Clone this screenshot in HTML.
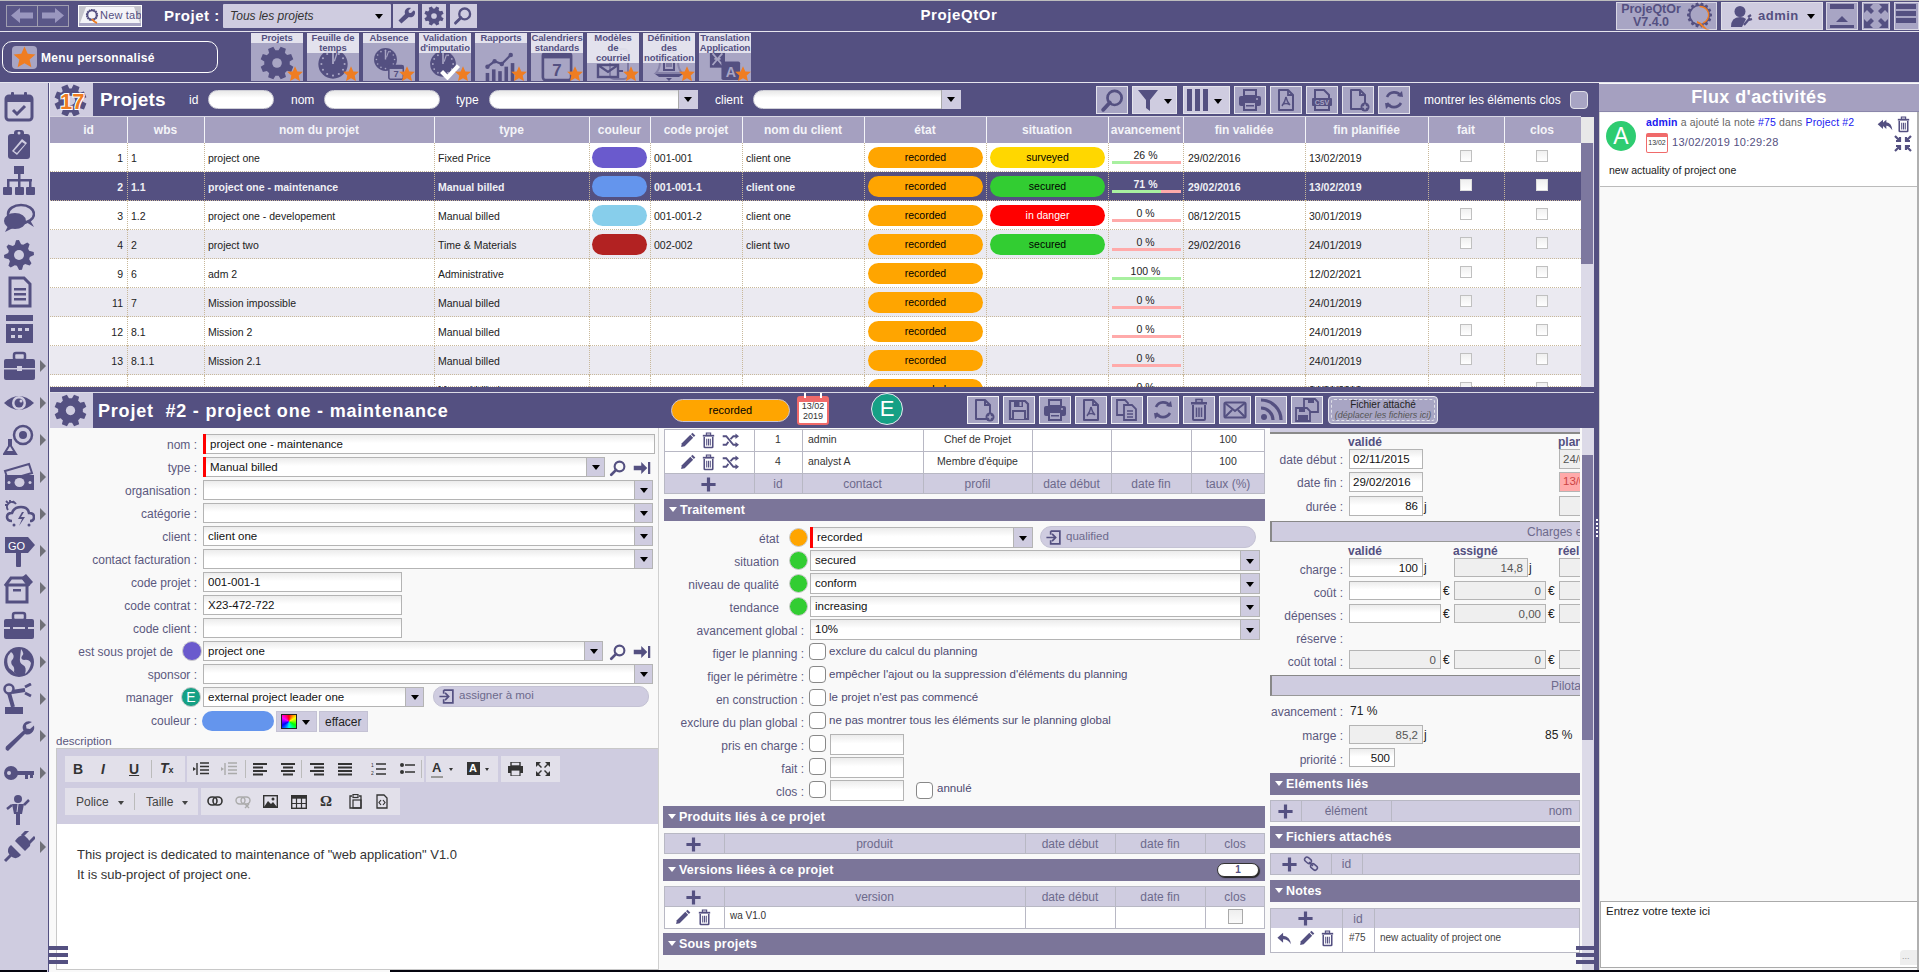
<!DOCTYPE html>
<html><head><meta charset="utf-8"><style>*{box-sizing:border-box}
html,body{margin:0;padding:0}
body{width:1919px;height:972px;overflow:hidden;position:relative;background:#545081;font-family:"Liberation Sans",sans-serif;font-size:11px;color:#000}
.a{position:absolute}
.w{color:#fff}
.b{font-weight:bold}
.c{text-align:center}
.r{text-align:right}
.nw{white-space:nowrap}</style></head><body>
<div class="a" style="left:0;top:0;width:1919px;height:1px;background:#bdbdbd"></div>
<div class="a" style="left:0;top:31px;width:1919px;height:1px;background:#e6e5ee"></div>
<div class="a" style="left:0;top:82px;width:1919px;height:1px;background:#e6e5ee"></div>
<div class="a" style="left:6px;top:5px;width:63px;height:22px;border:1px solid #a09eb0;background:#5a5788"></div>
<div class="a" style="left:37px;top:5px;width:1px;height:22px;background:#a09eb0"></div>
<svg class="a" style="left:10px;top:7px" width="24" height="17" viewBox="0 0 24 17"><path d="M1 8.5 L10 1 V5.5 H23 V11.5 H10 V16z" fill="#9a97bf"/></svg>
<svg class="a" style="left:41px;top:7px" width="24" height="17" viewBox="0 0 24 17"><path d="M23 8.5 L14 1 V5.5 H1 V11.5 H14 V16z" fill="#9a97bf"/></svg>
<div class="a" style="left:78px;top:5px;width:64px;height:22px;background:#c4c4cc;border:1px solid #fff"></div>
<div class="a" style="left:79px;top:23px;width:62px;height:3px;background:#a8a5c4"></div>
<div class="a" style="left:80px;top:7px;width:60px;height:16px;background:#f4f4f8;clip-path:polygon(10% 0,90% 0,100% 100%,0 100%)"></div>
<svg class="a" style="left:85px;top:8px" width="15" height="16" viewBox="0 0 15 16"><circle cx="7" cy="7" r="5" fill="none" stroke="#545081" stroke-width="2.2" stroke-dasharray="1.6 .6"/><circle cx="7" cy="7" r="4.5" fill="none" stroke="#545081" stroke-width="1.4"/><path d="M7 11 Q9 14 12 15" stroke="#ef7d22" stroke-width="2" fill="none"/></svg>
<div class="a nw" style="left:100px;top:9px;font-size:11px;color:#545081;letter-spacing:.2px;width:41px;overflow:hidden">New tab</div>
<div class="a w b nw" style="left:164px;top:7px;font-size:15px;letter-spacing:.5px">Projet :</div>
<div class="a" style="left:223px;top:4px;width:168px;height:24px;background:#cfcce0;border-radius:1px"></div>
<div class="a nw" style="left:230px;top:9px;font-size:12px;font-style:italic;color:#333">Tous les projets</div>
<div class="a" style="left:375px;top:14px;width:0;height:0;border-left:4px solid transparent;border-right:4px solid transparent;border-top:5px solid #000"></div>
<div class="a" style="left:393px;top:4px;width:25px;height:24px;background:#cfcce0"></div>
<div class="a" style="left:422px;top:4px;width:24px;height:24px;background:#cfcce0"></div>
<div class="a" style="left:450px;top:4px;width:27px;height:24px;background:#cfcce0"></div>
<svg class="a" style="left:396px;top:6px" width="20" height="20" viewBox="0 0 24 24"><path d="M21 5.5l-3 3-2.5-.5-.5-2.5 3-3c-2-.8-4.3-.4-5.9 1.2-1.6 1.6-2 3.9-1.2 5.9L3 17.5 6.5 21l8.9-7.9c2 .8 4.3.4 5.9-1.2 1.6-1.6 2-3.9 1.2-5.9z" fill="#545081"/></svg>
<svg class="a" style="left:424px;top:6px" width="20" height="20" viewBox="0 0 24 24"><polygon points="20.94,13.08 23.52,14.58 22.00,18.27 19.11,17.52 18.64,18.08 18.12,18.60 17.56,19.08 18.32,21.96 14.64,23.50 13.13,20.93 12.39,20.99 11.66,20.99 10.92,20.94 9.42,23.52 5.73,22.00 6.48,19.11 5.92,18.64 5.40,18.12 4.92,17.56 2.04,18.32 0.50,14.64 3.07,13.13 3.01,12.39 3.01,11.66 3.06,10.92 0.48,9.42 2.00,5.73 4.89,6.48 5.36,5.92 5.88,5.40 6.44,4.92 5.68,2.04 9.36,0.50 10.87,3.07 11.61,3.01 12.34,3.01 13.08,3.06 14.58,0.48 18.27,2.00 17.52,4.89 18.08,5.36 18.60,5.88 19.08,6.44 21.96,5.68 23.50,9.36 20.93,10.87 20.99,11.61 20.99,12.34" fill="#545081"/><circle cx="12" cy="12" r="3.4" fill="#cfcce0"/></svg>
<svg class="a" style="left:453px;top:6px" width="20" height="20" viewBox="0 0 24 24"><circle cx="14" cy="9.5" r="6.5" fill="none" stroke="#545081" stroke-width="2.8"/><path d="M9.5 14 L3 20.5" stroke="#545081" stroke-width="3.5" stroke-linecap="round"/></svg>
<div class="a w b nw" style="left:880px;top:6px;width:158px;text-align:center;font-size:15px;letter-spacing:.6px">ProjeQtOr</div>
<div class="a" style="left:1616px;top:2px;width:101px;height:28px;background:#a8a5c4;border:1px solid #d8d6e4"></div>
<div class="a b c nw" style="left:1618px;top:3px;width:66px;font-size:12.5px;line-height:13px;color:#545081">ProjeQtOr<br>V7.4.0</div>
<svg class="a" style="left:1686px;top:2px" width="28" height="29" viewBox="0 0 28 29"><polygon points="23.87,11.33 25.94,11.75 25.94,14.25 23.87,14.67 23.78,15.12 23.68,15.56 23.57,15.99 25.25,17.27 24.16,19.52 22.11,19.00 21.85,19.37 21.57,19.72 21.27,20.06 22.23,21.95 20.28,23.50 18.66,22.15 18.26,22.36 17.85,22.56 17.44,22.73 17.48,24.85 15.05,25.40 14.18,23.48 13.73,23.50 13.27,23.50 12.82,23.48 11.95,25.40 9.52,24.85 9.56,22.73 9.15,22.56 8.74,22.36 8.34,22.15 6.72,23.50 4.77,21.95 5.73,20.06 5.43,19.72 5.15,19.37 4.89,19.00 2.84,19.52 1.75,17.27 3.43,15.99 3.32,15.56 3.22,15.12 3.13,14.67 1.06,14.25 1.06,11.75 3.13,11.33 3.22,10.88 3.32,10.44 3.43,10.01 1.75,8.73 2.84,6.48 4.89,7.00 5.15,6.63 5.43,6.28 5.73,5.94 4.77,4.05 6.72,2.50 8.34,3.85 8.74,3.64 9.15,3.44 9.56,3.27 9.52,1.15 11.95,0.60 12.82,2.52 13.27,2.50 13.73,2.50 14.18,2.52 15.05,0.60 17.48,1.15 17.44,3.27 17.85,3.44 18.26,3.64 18.66,3.85 20.28,2.50 22.23,4.05 21.27,5.94 21.57,6.28 21.85,6.63 22.11,7.00 24.16,6.48 25.25,8.73 23.57,10.01 23.68,10.44 23.78,10.88" fill="#545081"/><circle cx="13.5" cy="13" r="9" fill="#a8a5c4"/><path d="M13.5 4.5 A8.5 8.5 0 0 1 17 21" fill="none" stroke="#ef7d22" stroke-width="1.4"/><path d="M11 19 Q15 20 18 24 Q20 27 24 28 Q19 28 16 25 Q14 22 11 21z" fill="#ef7d22"/></svg>
<div class="a" style="left:1721px;top:2px;width:102px;height:28px;background:#cfcce0;border:1px solid #e0dfe8"></div>
<svg class="a" style="left:1730px;top:5px" width="24" height="22" viewBox="0 0 24 22"><circle cx="10" cy="6.5" r="5.5" fill="#545081"/><path d="M1 22 Q1 12 10 12 Q14 12 16 14 L12 22z" fill="#545081"/><path d="M14 20 L20 13 M18 12 l3-2 M19 15 l3-1" stroke="#545081" stroke-width="2.2"/></svg>
<div class="a b nw" style="left:1758px;top:8px;font-size:13px;color:#545081;letter-spacing:.5px">admin</div>
<div class="a" style="left:1807px;top:14px;width:0;height:0;border-left:4px solid transparent;border-right:4px solid transparent;border-top:5px solid #000"></div>
<div class="a" style="left:1826px;top:2px;width:32px;height:28px;background:#a8a5c4;border:1px solid #d8d6e4"></div>
<div class="a" style="left:1862px;top:2px;width:28px;height:28px;background:#a8a5c4;border:1px solid #d8d6e4"></div>
<div class="a" style="left:1894px;top:2px;width:25px;height:28px;background:#a8a5c4;border:1px solid #d8d6e4"></div>
<div class="a" style="left:1830px;top:4px;width:24px;height:5px;background:#545081"></div><div class="a" style="left:1830px;top:25px;width:24px;height:3px;background:#545081"></div><div class="a" style="left:1836px;top:16px;width:0;height:0;border-left:6px solid transparent;border-right:6px solid transparent;border-bottom:6px solid #545081"></div>
<svg class="a" style="left:1863px;top:3px" width="26" height="26" viewBox="0 0 26 26"><path d="M1 1h9l-3 3 4 4-3 3-4-4-3 3zM25 1v9l-3-3-4 4-3-3 4-4-3-3zM1 25v-9l3 3 4-4 3 3-4 4 3 3zM25 25h-9l3-3-4-4 3-3 4 4 3-3z" fill="#545081"/></svg>
<div class="a" style="left:1896px;top:4px;width:20px;height:5px;background:#545081"></div><div class="a" style="left:1896px;top:11px;width:20px;height:5px;background:#545081"></div><div class="a" style="left:1896px;top:18px;width:20px;height:5px;background:#545081"></div>
<div class="a" style="left:2px;top:41px;width:216px;height:32px;border:1px solid #fff;border-radius:10px"></div>
<div class="a" style="left:12px;top:46px;width:25px;height:23px;background:#a8a5c4;border-radius:4px"></div>
<svg class="a" style="left:12px;top:45px" width="25" height="25" viewBox="0 0 24 24"><path d="M12 1.5l3.1 7 7.4.6-5.6 4.9 1.7 7.4L12 17.5l-6.6 3.9 1.7-7.4L1.5 9.1l7.4-.6z" fill="#ef7d22"/></svg>
<div class="a w b nw" style="left:41px;top:51px;font-size:12px;letter-spacing:.3px">Menu personnalisé</div>
<div class="a" style="left:251px;top:33px;width:52px;height:48px;background:#a8a5c4;overflow:hidden">
<svg class="a" style="left:9px;top:13px" width="34" height="34" viewBox="0 0 24 24"><polygon points="20.94,13.08 23.52,14.58 22.00,18.27 19.11,17.52 18.64,18.08 18.12,18.60 17.56,19.08 18.32,21.96 14.64,23.50 13.13,20.93 12.39,20.99 11.66,20.99 10.92,20.94 9.42,23.52 5.73,22.00 6.48,19.11 5.92,18.64 5.40,18.12 4.92,17.56 2.04,18.32 0.50,14.64 3.07,13.13 3.01,12.39 3.01,11.66 3.06,10.92 0.48,9.42 2.00,5.73 4.89,6.48 5.36,5.92 5.88,5.40 6.44,4.92 5.68,2.04 9.36,0.50 10.87,3.07 11.61,3.01 12.34,3.01 13.08,3.06 14.58,0.48 18.27,2.00 17.52,4.89 18.08,5.36 18.60,5.88 19.08,6.44 21.96,5.68 23.50,9.36 20.93,10.87 20.99,11.61 20.99,12.34" fill="#545081"/><circle cx="12" cy="12" r="3.4" fill="#a8a5c4"/></svg>
<div class="a" style="left:0;top:0;width:52px;height:10px;background:rgba(235,234,242,.88)"></div>
<div class="a b c nw" style="left:-4px;top:0;width:60px;font-size:9.5px;line-height:10px;color:#545081;letter-spacing:-.1px">Projets</div>
<svg class="a" style="left:35px;top:32px" width="18" height="18" viewBox="0 0 24 24"><path d="M12 1.5l3.1 7 7.4.6-5.6 4.9 1.7 7.4L12 17.5l-6.6 3.9 1.7-7.4L1.5 9.1l7.4-.6z" fill="#ef7d22"/></svg>
</div>
<div class="a" style="left:307px;top:33px;width:52px;height:48px;background:#a8a5c4;overflow:hidden">
<svg class="a" style="left:10px;top:15px" width="32" height="32" viewBox="0 0 24 24"><circle cx="12" cy="12" r="11" fill="#545081"/><circle cx="20.70" cy="12.00" r="0.8" fill="#a8a5c4"/><circle cx="19.53" cy="16.35" r="0.8" fill="#a8a5c4"/><circle cx="16.35" cy="19.53" r="0.8" fill="#a8a5c4"/><circle cx="12.00" cy="20.70" r="0.8" fill="#a8a5c4"/><circle cx="7.65" cy="19.53" r="0.8" fill="#a8a5c4"/><circle cx="4.47" cy="16.35" r="0.8" fill="#a8a5c4"/><circle cx="3.30" cy="12.00" r="0.8" fill="#a8a5c4"/><circle cx="4.47" cy="7.65" r="0.8" fill="#a8a5c4"/><circle cx="7.65" cy="4.47" r="0.8" fill="#a8a5c4"/><circle cx="12.00" cy="3.30" r="0.8" fill="#a8a5c4"/><circle cx="16.35" cy="4.47" r="0.8" fill="#a8a5c4"/><circle cx="19.53" cy="7.65" r="0.8" fill="#a8a5c4"/><rect x="11.3" y="3" width="1.4" height="9" fill="#a8a5c4"/><path d="M13 10 L15 4" stroke="#a8a5c4" stroke-width="1"/></svg>
<div class="a" style="left:0;top:0;width:52px;height:20px;background:rgba(235,234,242,.88)"></div>
<div class="a b c nw" style="left:-4px;top:0;width:60px;font-size:9.5px;line-height:10px;color:#545081;letter-spacing:-.1px">Feuille de<br>temps</div>
<svg class="a" style="left:35px;top:32px" width="18" height="18" viewBox="0 0 24 24"><path d="M12 1.5l3.1 7 7.4.6-5.6 4.9 1.7 7.4L12 17.5l-6.6 3.9 1.7-7.4L1.5 9.1l7.4-.6z" fill="#ef7d22"/></svg>
</div>
<div class="a" style="left:363px;top:33px;width:52px;height:48px;background:#a8a5c4;overflow:hidden">
<svg class="a" style="left:10px;top:14px" width="25" height="25" viewBox="0 0 24 24"><circle cx="12" cy="12" r="11" fill="#545081"/><circle cx="20.70" cy="12.00" r="0.8" fill="#a8a5c4"/><circle cx="19.53" cy="16.35" r="0.8" fill="#a8a5c4"/><circle cx="16.35" cy="19.53" r="0.8" fill="#a8a5c4"/><circle cx="12.00" cy="20.70" r="0.8" fill="#a8a5c4"/><circle cx="7.65" cy="19.53" r="0.8" fill="#a8a5c4"/><circle cx="4.47" cy="16.35" r="0.8" fill="#a8a5c4"/><circle cx="3.30" cy="12.00" r="0.8" fill="#a8a5c4"/><circle cx="4.47" cy="7.65" r="0.8" fill="#a8a5c4"/><circle cx="7.65" cy="4.47" r="0.8" fill="#a8a5c4"/><circle cx="12.00" cy="3.30" r="0.8" fill="#a8a5c4"/><circle cx="16.35" cy="4.47" r="0.8" fill="#a8a5c4"/><circle cx="19.53" cy="7.65" r="0.8" fill="#a8a5c4"/><rect x="11.3" y="3" width="1.4" height="9" fill="#a8a5c4"/><path d="M13 10 L15 4" stroke="#a8a5c4" stroke-width="1"/></svg><svg class="a" style="left:25px;top:30px" width="17" height="17" viewBox="0 0 20 20"><rect x="1" y="3" width="17" height="16" rx="2" fill="#a8a5c4" stroke="#545081" stroke-width="1.8"/><rect x="1" y="3" width="17" height="4" fill="#545081"/><text x="9.5" y="17" font-size="11" font-weight="bold" text-anchor="middle" fill="#545081" font-family="Liberation Sans">7</text></svg>
<div class="a" style="left:0;top:0;width:52px;height:10px;background:rgba(235,234,242,.88)"></div>
<div class="a b c nw" style="left:-4px;top:0;width:60px;font-size:9.5px;line-height:10px;color:#545081;letter-spacing:-.1px">Absence</div>
<svg class="a" style="left:35px;top:32px" width="18" height="18" viewBox="0 0 24 24"><path d="M12 1.5l3.1 7 7.4.6-5.6 4.9 1.7 7.4L12 17.5l-6.6 3.9 1.7-7.4L1.5 9.1l7.4-.6z" fill="#ef7d22"/></svg>
</div>
<div class="a" style="left:419px;top:33px;width:52px;height:48px;background:#a8a5c4;overflow:hidden">
<svg class="a" style="left:10px;top:17px" width="28" height="28" viewBox="0 0 24 24"><circle cx="12" cy="12" r="11" fill="#545081"/><circle cx="20.70" cy="12.00" r="0.8" fill="#a8a5c4"/><circle cx="19.53" cy="16.35" r="0.8" fill="#a8a5c4"/><circle cx="16.35" cy="19.53" r="0.8" fill="#a8a5c4"/><circle cx="12.00" cy="20.70" r="0.8" fill="#a8a5c4"/><circle cx="7.65" cy="19.53" r="0.8" fill="#a8a5c4"/><circle cx="4.47" cy="16.35" r="0.8" fill="#a8a5c4"/><circle cx="3.30" cy="12.00" r="0.8" fill="#a8a5c4"/><circle cx="4.47" cy="7.65" r="0.8" fill="#a8a5c4"/><circle cx="7.65" cy="4.47" r="0.8" fill="#a8a5c4"/><circle cx="12.00" cy="3.30" r="0.8" fill="#a8a5c4"/><circle cx="16.35" cy="4.47" r="0.8" fill="#a8a5c4"/><circle cx="19.53" cy="7.65" r="0.8" fill="#a8a5c4"/><rect x="11.3" y="3" width="1.4" height="9" fill="#a8a5c4"/><path d="M13 10 L15 4" stroke="#a8a5c4" stroke-width="1"/></svg><svg class="a" style="left:20px;top:30px" width="22" height="17" viewBox="0 0 26 20"><path d="M3 10 L10 17 L23 3" stroke="#fff" stroke-width="5" fill="none"/></svg>
<div class="a" style="left:0;top:0;width:52px;height:20px;background:rgba(235,234,242,.88)"></div>
<div class="a b c nw" style="left:-4px;top:0;width:60px;font-size:9.5px;line-height:10px;color:#545081;letter-spacing:-.1px">Validation<br>d'imputatio</div>
<svg class="a" style="left:35px;top:32px" width="18" height="18" viewBox="0 0 24 24"><path d="M12 1.5l3.1 7 7.4.6-5.6 4.9 1.7 7.4L12 17.5l-6.6 3.9 1.7-7.4L1.5 9.1l7.4-.6z" fill="#ef7d22"/></svg>
</div>
<div class="a" style="left:475px;top:33px;width:52px;height:48px;background:#a8a5c4;overflow:hidden">
<svg class="a" style="left:9px;top:14px" width="32" height="34" viewBox="0 0 34 38"><path d="M3 22 L11 16 L19 19 L29 9" stroke="#545081" stroke-width="2.5" fill="none"/><circle cx="3" cy="22" r="2.5" fill="#545081"/><circle cx="11" cy="16" r="2.5" fill="#545081"/><circle cx="19" cy="19" r="2.5" fill="#545081"/><circle cx="29" cy="9" r="2.5" fill="#545081"/><rect x="1" y="29" width="4" height="9" fill="#545081"/><rect x="8" y="25" width="4" height="13" fill="#545081"/><rect x="15" y="27" width="4" height="11" fill="#545081"/><rect x="22" y="22" width="4" height="16" fill="#545081"/><rect x="29" y="18" width="4" height="20" fill="#545081"/></svg>
<div class="a" style="left:0;top:0;width:52px;height:10px;background:rgba(235,234,242,.88)"></div>
<div class="a b c nw" style="left:-4px;top:0;width:60px;font-size:9.5px;line-height:10px;color:#545081;letter-spacing:-.1px">Rapports</div>
<svg class="a" style="left:35px;top:32px" width="18" height="18" viewBox="0 0 24 24"><path d="M12 1.5l3.1 7 7.4.6-5.6 4.9 1.7 7.4L12 17.5l-6.6 3.9 1.7-7.4L1.5 9.1l7.4-.6z" fill="#ef7d22"/></svg>
</div>
<div class="a" style="left:531px;top:33px;width:52px;height:48px;background:#a8a5c4;overflow:hidden">
<svg class="a" style="left:10px;top:16px" width="32" height="32" viewBox="0 0 34 34"><rect x="2" y="4" width="30" height="29" rx="3" fill="none" stroke="#545081" stroke-width="2.8"/><rect x="2" y="4" width="30" height="6" fill="#545081"/><rect x="8" y="0" width="3" height="7" fill="#545081"/><rect x="23" y="0" width="3" height="7" fill="#545081"/><text x="17" y="29" font-size="18" font-weight="bold" text-anchor="middle" fill="#545081" font-family="Liberation Sans">7</text></svg>
<div class="a" style="left:0;top:0;width:52px;height:20px;background:rgba(235,234,242,.88)"></div>
<div class="a b c nw" style="left:-4px;top:0;width:60px;font-size:9.5px;line-height:10px;color:#545081;letter-spacing:-.1px">Calendriers<br>standards</div>
<svg class="a" style="left:35px;top:32px" width="18" height="18" viewBox="0 0 24 24"><path d="M12 1.5l3.1 7 7.4.6-5.6 4.9 1.7 7.4L12 17.5l-6.6 3.9 1.7-7.4L1.5 9.1l7.4-.6z" fill="#ef7d22"/></svg>
</div>
<div class="a" style="left:587px;top:33px;width:52px;height:48px;background:#a8a5c4;overflow:hidden">
<svg class="a" style="left:9px;top:14px" width="34" height="34" viewBox="0 0 34 34"><rect x="14" y="2" width="18" height="30" rx="4" fill="none" stroke="#545081" stroke-width="2" opacity=".5"/><rect x="2" y="18" width="20" height="12" fill="none" stroke="#545081" stroke-width="2.4"/><path d="M2 18 L12 25 L22 18" stroke="#545081" stroke-width="2.2" fill="none"/><path d="M22 24 h5" stroke="#545081" stroke-width="2"/></svg>
<div class="a" style="left:0;top:0;width:52px;height:30px;background:rgba(235,234,242,.88)"></div>
<div class="a b c nw" style="left:-4px;top:0;width:60px;font-size:9.5px;line-height:10px;color:#545081;letter-spacing:-.1px">Modèles<br>de<br>courriel</div>
<svg class="a" style="left:35px;top:32px" width="18" height="18" viewBox="0 0 24 24"><path d="M12 1.5l3.1 7 7.4.6-5.6 4.9 1.7 7.4L12 17.5l-6.6 3.9 1.7-7.4L1.5 9.1l7.4-.6z" fill="#ef7d22"/></svg>
</div>
<div class="a" style="left:643px;top:33px;width:52px;height:48px;background:#a8a5c4;overflow:hidden">
<svg class="a" style="left:9px;top:14px" width="34" height="34" viewBox="0 0 34 34"><path d="M4 26 Q8 22 8 14 Q8 5 17 5 Q26 5 26 14 Q26 22 30 26z" fill="none" stroke="#545081" stroke-width="2" opacity=".4"/><rect x="11" y="14" width="12" height="10" fill="#545081"/><rect x="13" y="16" width="8" height="6" fill="#a8a5c4"/><path d="M14 17h6M14 19h6" stroke="#545081" stroke-width="1"/><path d="M3 27 h28 l-4 3 h-20z" fill="#545081"/><path d="M14 31 l3 3 3-3z" fill="#545081"/></svg>
<div class="a" style="left:0;top:0;width:52px;height:30px;background:rgba(235,234,242,.88)"></div>
<div class="a b c nw" style="left:-4px;top:0;width:60px;font-size:9.5px;line-height:10px;color:#545081;letter-spacing:-.1px">Définition<br>des<br>notification</div>
<svg class="a" style="left:35px;top:32px" width="18" height="18" viewBox="0 0 24 24"><path d="M12 1.5l3.1 7 7.4.6-5.6 4.9 1.7 7.4L12 17.5l-6.6 3.9 1.7-7.4L1.5 9.1l7.4-.6z" fill="#ef7d22"/></svg>
</div>
<div class="a" style="left:699px;top:33px;width:52px;height:48px;background:#a8a5c4;overflow:hidden">
<svg class="a" style="left:10px;top:16px" width="32" height="32" viewBox="0 0 36 34"><rect x="1" y="1" width="17" height="19" fill="#545081"/><path d="M4 4 L15 17 M15 4 L4 17 M6 10h7" stroke="#a8a5c4" stroke-width="2"/><rect x="14" y="13" width="21" height="21" rx="2" fill="#545081"/><text x="24.5" y="30" font-size="16" font-weight="bold" text-anchor="middle" fill="#a8a5c4" font-family="Liberation Sans">A</text></svg>
<div class="a" style="left:0;top:0;width:52px;height:20px;background:rgba(235,234,242,.88)"></div>
<div class="a b c nw" style="left:-4px;top:0;width:60px;font-size:9.5px;line-height:10px;color:#545081;letter-spacing:-.1px">Translation<br>Application</div>
<svg class="a" style="left:35px;top:32px" width="18" height="18" viewBox="0 0 24 24"><path d="M12 1.5l3.1 7 7.4.6-5.6 4.9 1.7 7.4L12 17.5l-6.6 3.9 1.7-7.4L1.5 9.1l7.4-.6z" fill="#ef7d22"/></svg>
</div>
<div class="a" style="left:0;top:83px;width:48px;height:889px;background:#cfcce0"></div>
<div class="a" style="left:48px;top:83px;width:1px;height:889px;background:#545081"></div>
<div class="a" style="left:49px;top:83px;width:1px;height:889px;background:#f4f4f8"></div>
<svg class="a" style="left:3px;top:91px" width="32" height="32" viewBox="0 0 32 32"><rect x="3" y="5" width="26" height="24" rx="3" fill="none" stroke="#545081" stroke-width="3"/><rect x="3" y="5" width="26" height="6" fill="#545081"/><rect x="8" y="1" width="3" height="6" rx="1" fill="#545081"/><rect x="21" y="1" width="3" height="6" rx="1" fill="#545081"/><path d="M10 19 l4 4 l8 -8" stroke="#545081" stroke-width="3" fill="none"/></svg>
<svg class="a" style="left:3px;top:128px" width="32" height="32" viewBox="0 0 32 32"><rect x="5" y="6" width="22" height="25" rx="3" fill="#545081"/><rect x="11" y="2" width="10" height="7" rx="3" fill="#545081"/><circle cx="16" cy="5" r="1.5" fill="#cfcce0"/><path d="M9 23 L19 11 L24 15 L14 27z" fill="#cfcce0"/><path d="M11 23 L19 14 L22 16 L14 25z" fill="#545081"/></svg>
<svg class="a" style="left:3px;top:165px" width="32" height="32" viewBox="0 0 32 32"><rect x="11" y="1" width="10" height="8" fill="#545081"/><rect x="15" y="9" width="2.5" height="7" fill="#545081"/><rect x="4" y="14" width="25" height="2.5" fill="#545081"/><rect x="4" y="14" width="2.5" height="8" fill="#545081"/><rect x="15" y="14" width="2.5" height="8" fill="#545081"/><rect x="26" y="14" width="2.5" height="8" fill="#545081"/><rect x="0" y="22" width="9" height="8" rx="1" fill="#545081"/><rect x="12" y="22" width="9" height="8" rx="1" fill="#545081"/><rect x="23" y="22" width="9" height="8" rx="1" fill="#545081"/></svg>
<svg class="a" style="left:3px;top:202px" width="32" height="32" viewBox="0 0 32 32"><ellipse cx="18" cy="12" rx="13" ry="9" fill="none" stroke="#545081" stroke-width="2.5"/><path d="M27 18 L31 25 L23 20z" fill="#545081"/><ellipse cx="12" cy="19" rx="11" ry="8" fill="#545081"/><path d="M5 24 L2 30 L10 26z" fill="#545081"/></svg>
<svg class="a" style="left:3px;top:239px" width="32" height="32" viewBox="0 0 32 32"><polygon points="30.70,13.02 31.00,15.95 26.80,18.11 26.18,20.17 28.50,24.29 26.65,26.57 22.14,25.12 20.25,26.15 18.98,30.70 16.05,31.00 13.89,26.80 11.83,26.18 7.71,28.50 5.43,26.65 6.88,22.14 5.85,20.25 1.30,18.98 1.00,16.05 5.20,13.89 5.82,11.83 3.50,7.71 5.35,5.43 9.86,6.88 11.75,5.85 13.02,1.30 15.95,1.00 18.11,5.20 20.17,5.82 24.29,3.50 26.57,5.35 25.12,9.86 26.15,11.75" fill="#545081"/><circle cx="16" cy="16" r="5" fill="#cfcce0"/></svg>
<svg class="a" style="left:3px;top:276px" width="32" height="32" viewBox="0 0 32 32"><path d="M7 2 H21 L27 8 V30 H7z" fill="none" stroke="#545081" stroke-width="3"/><rect x="11" y="12" width="12" height="2.5" fill="#545081"/><rect x="11" y="17" width="12" height="2.5" fill="#545081"/><rect x="11" y="22" width="12" height="2.5" fill="#545081"/></svg>
<svg class="a" style="left:3px;top:313px" width="32" height="32" viewBox="0 0 32 32"><rect x="3" y="2" width="27" height="6" fill="#545081"/><rect x="3" y="11" width="27" height="19" fill="#545081"/><rect x="8" y="15" width="4" height="3" fill="#cfcce0"/><rect x="15" y="15" width="4" height="3" fill="#cfcce0"/><rect x="22" y="15" width="4" height="3" fill="#cfcce0"/><rect x="8" y="22" width="4" height="3" fill="#cfcce0"/><rect x="15" y="22" width="4" height="3" fill="#cfcce0"/></svg>
<svg class="a" style="left:3px;top:350px" width="32" height="32" viewBox="0 0 32 32"><rect x="1" y="9" width="31" height="21" rx="2" fill="#545081"/><rect x="11" y="3" width="11" height="7" rx="2" fill="none" stroke="#545081" stroke-width="2.5"/><rect x="1" y="18" width="31" height="1.5" fill="#cfcce0"/><rect x="14" y="16" width="5" height="5" fill="#cfcce0"/></svg>
<div class="a" style="left:40px;top:360px;width:0;height:0;border-top:6px solid transparent;border-bottom:6px solid transparent;border-left:6px solid #707078"></div>
<svg class="a" style="left:3px;top:387px" width="32" height="32" viewBox="0 0 32 32"><path d="M1 16 Q16 2 31 16 Q16 30 1 16z" fill="#545081"/><circle cx="16" cy="16" r="7" fill="#cfcce0"/><circle cx="16" cy="16" r="4.5" fill="#545081"/><circle cx="18" cy="14" r="1.5" fill="#cfcce0"/></svg>
<div class="a" style="left:40px;top:397px;width:0;height:0;border-top:6px solid transparent;border-bottom:6px solid transparent;border-left:6px solid #707078"></div>
<svg class="a" style="left:3px;top:424px" width="32" height="32" viewBox="0 0 32 32"><circle cx="20" cy="11" r="9" fill="none" stroke="#545081" stroke-width="2.5"/><circle cx="20" cy="11" r="4" fill="#545081"/><path d="M6 15 V22 L1 30 H13 L8 22 V15" fill="none" stroke="#545081" stroke-width="2"/><path d="M3 27 h8 l2 3 h-12z" fill="#545081"/></svg>
<div class="a" style="left:40px;top:434px;width:0;height:0;border-top:6px solid transparent;border-bottom:6px solid transparent;border-left:6px solid #707078"></div>
<svg class="a" style="left:3px;top:461px" width="32" height="32" viewBox="0 0 32 32"><path d="M2 10 L26 3 L29 12 L5 19z" fill="none" stroke="#545081" stroke-width="2"/><rect x="2" y="14" width="29" height="15" fill="#545081"/><ellipse cx="16.5" cy="21.5" rx="5" ry="4.5" fill="#cfcce0"/><circle cx="6" cy="21.5" r="1.5" fill="#cfcce0"/><circle cx="27" cy="21.5" r="1.5" fill="#cfcce0"/></svg>
<div class="a" style="left:40px;top:471px;width:0;height:0;border-top:6px solid transparent;border-bottom:6px solid transparent;border-left:6px solid #707078"></div>
<svg class="a" style="left:3px;top:498px" width="32" height="32" viewBox="0 0 32 32"><path d="M7 2v3M2 7h3M3 3l2 2M11 3l-1.5 2" stroke="#545081" stroke-width="1.8"/><path d="M5 12 A5 5 0 0 1 13 6" fill="none" stroke="#545081" stroke-width="2"/><path d="M9 23 Q4 23 4 19 Q4 15 9 15 Q11 9 18 9 Q25 9 26 15 Q31 15 31 19 Q31 23 27 23" fill="none" stroke="#545081" stroke-width="2.6"/><path d="M19 14 L15 21 H19 L16 28 L22 19 H18 L21 14z" fill="#545081"/><circle cx="11" cy="27" r="1.5" fill="#545081"/><circle cx="26" cy="27" r="1.5" fill="#545081"/></svg>
<div class="a" style="left:40px;top:508px;width:0;height:0;border-top:6px solid transparent;border-bottom:6px solid transparent;border-left:6px solid #707078"></div>
<svg class="a" style="left:3px;top:535px" width="32" height="32" viewBox="0 0 32 32"><rect x="13" y="17" width="5" height="15" rx="1" fill="#545081"/><path d="M2 2 H25 L32 10 L25 18 H2z" fill="#545081"/><text x="13.5" y="14.5" font-size="11" font-family="Liberation Sans" fill="#fff" text-anchor="middle">GO</text></svg>
<div class="a" style="left:40px;top:545px;width:0;height:0;border-top:6px solid transparent;border-bottom:6px solid transparent;border-left:6px solid #707078"></div>
<svg class="a" style="left:3px;top:572px" width="32" height="32" viewBox="0 0 32 32"><rect x="4" y="13" width="20" height="17" fill="none" stroke="#545081" stroke-width="3"/><path d="M2 14 L8 6 H20 L26 14" fill="none" stroke="#545081" stroke-width="3"/><path d="M18 6 L23 2 L30 10 L26 14" fill="#545081"/><rect x="10" y="17" width="8" height="2.5" fill="#545081"/></svg>
<div class="a" style="left:40px;top:582px;width:0;height:0;border-top:6px solid transparent;border-bottom:6px solid transparent;border-left:6px solid #707078"></div>
<svg class="a" style="left:3px;top:609px" width="32" height="32" viewBox="0 0 32 32"><rect x="1" y="10" width="30" height="20" rx="2" fill="#545081"/><rect x="10" y="4" width="12" height="7" rx="2" fill="none" stroke="#545081" stroke-width="2.5"/><rect x="1" y="18" width="30" height="2" fill="#cfcce0"/><rect x="7" y="16" width="3" height="6" fill="#545081"/><rect x="22" y="16" width="3" height="6" fill="#545081"/></svg>
<div class="a" style="left:40px;top:619px;width:0;height:0;border-top:6px solid transparent;border-bottom:6px solid transparent;border-left:6px solid #707078"></div>
<svg class="a" style="left:3px;top:646px" width="32" height="32" viewBox="0 0 32 32"><circle cx="16" cy="16" r="15" fill="#545081"/><path d="M8 6 Q12 9 10 13 Q7 15 9 19 Q12 21 11 26 L14 29 Q10 25 6 22 Q3 16 5 10z M18 3 Q22 8 19 10 Q17 13 21 14 Q26 13 28 17 Q27 24 22 28 Q24 21 20 19 Q16 17 17 12z" fill="#cfcce0"/></svg>
<div class="a" style="left:40px;top:656px;width:0;height:0;border-top:6px solid transparent;border-bottom:6px solid transparent;border-left:6px solid #707078"></div>
<svg class="a" style="left:3px;top:683px" width="32" height="32" viewBox="0 0 32 32"><circle cx="6" cy="6" r="4.5" fill="none" stroke="#545081" stroke-width="2.5"/><path d="M6 10 L10 24" stroke="#545081" stroke-width="4"/><path d="M9 9 L22 7" stroke="#545081" stroke-width="4"/><path d="M22 4 L28 1 M22 10 L28 13" stroke="#545081" stroke-width="3"/><rect x="2" y="24" width="18" height="7" fill="#545081"/></svg>
<div class="a" style="left:40px;top:693px;width:0;height:0;border-top:6px solid transparent;border-bottom:6px solid transparent;border-left:6px solid #707078"></div>
<svg class="a" style="left:3px;top:720px" width="32" height="32" viewBox="0 0 32 32"><path d="M29 2 Q24 0 21 3.5 Q18.5 7 20.5 10.5 L3 26.5 Q1.5 30 5 31 L22 14 Q25.5 15.5 28.5 13 Q32 10 31 5.5 L27 9 L23.5 8.5 L23 5z" fill="#545081"/></svg>
<div class="a" style="left:40px;top:730px;width:0;height:0;border-top:6px solid transparent;border-bottom:6px solid transparent;border-left:6px solid #707078"></div>
<svg class="a" style="left:3px;top:757px" width="32" height="32" viewBox="0 0 32 32"><circle cx="8" cy="16" r="7" fill="#545081"/><circle cx="6" cy="16" r="2" fill="#cfcce0"/><rect x="13" y="14" width="18" height="4" fill="#545081"/><rect x="22" y="18" width="3" height="4" fill="#545081"/><rect x="27" y="18" width="3" height="3" fill="#545081"/></svg>
<div class="a" style="left:40px;top:767px;width:0;height:0;border-top:6px solid transparent;border-bottom:6px solid transparent;border-left:6px solid #707078"></div>
<svg class="a" style="left:3px;top:794px" width="32" height="32" viewBox="0 0 32 32"><circle cx="15" cy="5" r="4" fill="#545081"/><path d="M9 10 H21 L19 20 H17 V31 H13 V20 H11z" fill="#545081"/><path d="M15 10 L14 18" stroke="#cfcce0" stroke-width="1"/><path d="M21 11 L26 6 M9 11 L4 15" stroke="#545081" stroke-width="2.5"/></svg>
<svg class="a" style="left:3px;top:831px" width="32" height="32" viewBox="0 0 32 32"><path d="M2 30 L10 22" stroke="#545081" stroke-width="3"/><path d="M8 14 L18 24 Q14 29 9 26 L6 23 Q3 18 8 14z" fill="#545081"/><path d="M12 10 L22 20 L27 15 Q28 10 22 5 Q17 3 12 10z" fill="#545081"/><path d="M19 5 L25 -1 M26 12 L32 6" stroke="#545081" stroke-width="3"/></svg>
<div class="a" style="left:40px;top:841px;width:0;height:0;border-top:6px solid transparent;border-bottom:6px solid transparent;border-left:6px solid #707078"></div>
<div class="a" style="left:50px;top:83px;width:43px;height:33px;background:#cfcce0"></div>
<svg class="a" style="left:54px;top:84px" width="33" height="33" viewBox="0 0 24 24"><polygon points="20.76,12.79 23.59,14.23 21.81,18.57 18.79,17.60 18.43,18.01 18.04,18.40 17.64,18.76 18.62,21.77 14.29,23.58 12.84,20.76 12.30,20.80 11.75,20.80 11.21,20.76 9.77,23.59 5.43,21.81 6.40,18.79 5.99,18.43 5.60,18.04 5.24,17.64 2.23,18.62 0.42,14.29 3.24,12.84 3.20,12.30 3.20,11.75 3.24,11.21 0.41,9.77 2.19,5.43 5.21,6.40 5.57,5.99 5.96,5.60 6.36,5.24 5.38,2.23 9.71,0.42 11.16,3.24 11.70,3.20 12.25,3.20 12.79,3.24 14.23,0.41 18.57,2.19 17.60,5.21 18.01,5.57 18.40,5.96 18.76,6.36 21.77,5.38 23.58,9.71 20.76,11.16 20.80,11.70 20.80,12.25" fill="#545081"/><circle cx="12" cy="12" r="3.4" fill="#cfcce0"/></svg>
<div class="a b nw" style="left:60px;top:89px;font-size:22px;color:#ef7d22;letter-spacing:0px;text-shadow:1px 1px 0 #fff,-1px -1px 0 #fff,1px -1px 0 #fff,-1px 1px 0 #fff">17</div>
<div class="a w b nw" style="left:100px;top:89px;font-size:19px;letter-spacing:.2px">Projets</div>
<div class="a w nw" style="left:189px;top:93px;font-size:12px">id</div>
<div class="a w nw" style="left:291px;top:93px;font-size:12px">nom</div>
<div class="a w nw" style="left:456px;top:93px;font-size:12px">type</div>
<div class="a w nw" style="left:715px;top:93px;font-size:12px">client</div>
<div class="a" style="left:208px;top:90px;width:66px;height:19px;background:linear-gradient(#e8e8e8,#fff 40%);border-radius:10px;border:1px solid #d0d0d8"></div>
<div class="a" style="left:324px;top:90px;width:116px;height:19px;background:linear-gradient(#e8e8e8,#fff 40%);border-radius:10px;border:1px solid #d0d0d8"></div>
<div class="a" style="left:489px;top:90px;width:209px;height:19px;background:linear-gradient(#e8e8e8,#fff 40%);border-radius:10px 0 0 10px;border:1px solid #d0d0d8"></div>
<div class="a" style="left:678px;top:90px;width:20px;height:19px;background:#cfcce0;border-left:1px solid #aaa"></div>
<div class="a" style="left:684px;top:97px;width:0;height:0;border-left:4px solid transparent;border-right:4px solid transparent;border-top:5px solid #000"></div>
<div class="a" style="left:753px;top:90px;width:208px;height:19px;background:linear-gradient(#e8e8e8,#fff 40%);border-radius:10px 0 0 10px;border:1px solid #d0d0d8"></div>
<div class="a" style="left:941px;top:90px;width:20px;height:19px;background:#cfcce0;border-left:1px solid #aaa"></div>
<div class="a" style="left:947px;top:97px;width:0;height:0;border-left:4px solid transparent;border-right:4px solid transparent;border-top:5px solid #000"></div>
<div class="a" style="left:1096px;top:86px;width:32px;height:28px;background:#a8a5c4;border:1px solid #e4e3ec"></div>
<div class="a" style="left:1132px;top:86px;width:45px;height:28px;background:#cfcce0;border:1px solid #e4e3ec"></div>
<div class="a" style="left:1183px;top:86px;width:47px;height:28px;background:#cfcce0;border:1px solid #e4e3ec"></div>
<div class="a" style="left:1234px;top:86px;width:32px;height:28px;background:#a8a5c4;border:1px solid #e4e3ec"></div>
<div class="a" style="left:1270px;top:86px;width:32px;height:28px;background:#a8a5c4;border:1px solid #e4e3ec"></div>
<div class="a" style="left:1306px;top:86px;width:32px;height:28px;background:#a8a5c4;border:1px solid #e4e3ec"></div>
<div class="a" style="left:1342px;top:86px;width:32px;height:28px;background:#a8a5c4;border:1px solid #e4e3ec"></div>
<div class="a" style="left:1378px;top:86px;width:32px;height:28px;background:#a8a5c4;border:1px solid #e4e3ec"></div>
<svg class="a" style="left:1100px;top:88px" width="25" height="25" viewBox="0 0 24 24"><circle cx="14" cy="9.5" r="6.8" fill="none" stroke="#545081" stroke-width="2.6"/><path d="M9.5 14 L3 21" stroke="#545081" stroke-width="3.6" stroke-linecap="round"/></svg><svg class="a" style="left:1137px;top:89px" width="22" height="23" viewBox="0 0 22 23"><path d="M1 1 H21 L13 11 V22 L9 19 V11z" fill="#545081"/></svg><div class="a" style="left:1164px;top:99px;width:0;height:0;border-left:4px solid transparent;border-right:4px solid transparent;border-top:5px solid #000"></div><div class="a" style="left:1187px;top:89px;width:5px;height:22px;background:#545081"></div><div class="a" style="left:1195px;top:89px;width:5px;height:22px;background:#545081"></div><div class="a" style="left:1203px;top:89px;width:5px;height:22px;background:#545081"></div><div class="a" style="left:1214px;top:99px;width:0;height:0;border-left:4px solid transparent;border-right:4px solid transparent;border-top:5px solid #000"></div>
<svg class="a" style="left:1238px;top:88px" width="24" height="24" viewBox="0 0 24 24"><rect x="6" y="2" width="12" height="6" fill="none" stroke="#545081" stroke-width="2"/><rect x="1" y="8" width="22" height="10" rx="2" fill="#545081"/><rect x="6" y="14" width="12" height="8" fill="#a8a5c4" stroke="#545081" stroke-width="2"/><rect x="8" y="17" width="8" height="1.5" fill="#545081"/><circle cx="19" cy="11" r="1" fill="#a8a5c4"/></svg>
<svg class="a" style="left:1274px;top:88px" width="24" height="24" viewBox="0 0 24 24"><path d="M5 2 H14 L19 7 V22 H5z" fill="none" stroke="#545081" stroke-width="2" stroke-linejoin="round"/><path d="M14 2 V7 H19" fill="none" stroke="#545081" stroke-width="1.8"/><path d="M12 9 Q11 14 8 18 M12 9 Q13 14 16 17 M8 17 Q12 14 16 17" fill="none" stroke="#545081" stroke-width="1.4"/></svg>
<svg class="a" style="left:1310px;top:88px" width="24" height="24" viewBox="0 0 24 24"><path d="M5 2 H14 L19 7 V22 H5z" fill="none" stroke="#545081" stroke-width="2"/><rect x="2" y="10" width="20" height="8" rx="1" fill="#545081"/><text x="12" y="16.8" font-size="7" font-weight="bold" text-anchor="middle" fill="#a8a5c4" font-family="Liberation Sans">CSV</text></svg>
<svg class="a" style="left:1346px;top:88px" width="24" height="24" viewBox="0 0 24 24"><path d="M5 2 H14 L19 7 V21 H5z" fill="none" stroke="#545081" stroke-width="2" stroke-linejoin="round"/><path d="M14 2 V7 H19" fill="none" stroke="#545081" stroke-width="2"/><circle cx="19" cy="19" r="4.5" fill="#545081"/><path d="M19 16.5v5M16.5 19h5" stroke="#a8a5c4" stroke-width="1.6"/></svg>
<svg class="a" style="left:1382px;top:88px" width="24" height="24" viewBox="0 0 24 24"><path d="M19 8 A8 8 0 0 0 5 9" fill="none" stroke="#545081" stroke-width="2.6"/><path d="M5 15 A8 8 0 0 0 19 15" fill="none" stroke="#545081" stroke-width="2.6"/><path d="M15 8 L21 9 L20 3z" fill="#545081"/><path d="M9 16 L3 15 L4 21z" fill="#545081"/></svg>
<div class="a w nw" style="left:1424px;top:93px;font-size:12px">montrer les éléments clos</div>
<div class="a" style="left:1570px;top:91px;width:18px;height:18px;background:#a8a5c4;border:1px solid #e0e0e8;border-radius:4px"></div>
<div class="a" style="left:50px;top:116px;width:1531px;height:1px;background:#d8d6e4"></div>
<div class="a" style="left:50px;top:117px;width:1531px;height:26px;background:#a5a0c0"></div>
<div class="a b c nw" style="left:50px;top:123px;width:77px;font-size:12px;color:#f4f4f8">id</div>
<div class="a" style="left:127px;top:117px;width:1px;height:26px;background:#f4f4f8"></div>
<div class="a b c nw" style="left:127px;top:123px;width:77px;font-size:12px;color:#f4f4f8">wbs</div>
<div class="a" style="left:204px;top:117px;width:1px;height:26px;background:#f4f4f8"></div>
<div class="a b c nw" style="left:204px;top:123px;width:230px;font-size:12px;color:#f4f4f8">nom du projet</div>
<div class="a" style="left:434px;top:117px;width:1px;height:26px;background:#f4f4f8"></div>
<div class="a b c nw" style="left:434px;top:123px;width:155px;font-size:12px;color:#f4f4f8">type</div>
<div class="a" style="left:589px;top:117px;width:1px;height:26px;background:#f4f4f8"></div>
<div class="a b c nw" style="left:589px;top:123px;width:61px;font-size:12px;color:#f4f4f8">couleur</div>
<div class="a" style="left:650px;top:117px;width:1px;height:26px;background:#f4f4f8"></div>
<div class="a b c nw" style="left:650px;top:123px;width:92px;font-size:12px;color:#f4f4f8">code projet</div>
<div class="a" style="left:742px;top:117px;width:1px;height:26px;background:#f4f4f8"></div>
<div class="a b c nw" style="left:742px;top:123px;width:122px;font-size:12px;color:#f4f4f8">nom du client</div>
<div class="a" style="left:864px;top:117px;width:1px;height:26px;background:#f4f4f8"></div>
<div class="a b c nw" style="left:864px;top:123px;width:122px;font-size:12px;color:#f4f4f8">état</div>
<div class="a" style="left:986px;top:117px;width:1px;height:26px;background:#f4f4f8"></div>
<div class="a b c nw" style="left:986px;top:123px;width:122px;font-size:12px;color:#f4f4f8">situation</div>
<div class="a" style="left:1108px;top:117px;width:1px;height:26px;background:#f4f4f8"></div>
<div class="a b c nw" style="left:1108px;top:123px;width:75px;font-size:12px;color:#f4f4f8">avancement</div>
<div class="a" style="left:1183px;top:117px;width:1px;height:26px;background:#f4f4f8"></div>
<div class="a b c nw" style="left:1183px;top:123px;width:122px;font-size:12px;color:#f4f4f8">fin validée</div>
<div class="a" style="left:1305px;top:117px;width:1px;height:26px;background:#f4f4f8"></div>
<div class="a b c nw" style="left:1305px;top:123px;width:123px;font-size:12px;color:#f4f4f8">fin planifiée</div>
<div class="a" style="left:1428px;top:117px;width:1px;height:26px;background:#f4f4f8"></div>
<div class="a b c nw" style="left:1428px;top:123px;width:76px;font-size:12px;color:#f4f4f8">fait</div>
<div class="a" style="left:1504px;top:117px;width:1px;height:26px;background:#f4f4f8"></div>
<div class="a b c nw" style="left:1504px;top:123px;width:76px;font-size:12px;color:#f4f4f8">clos</div>
<div class="a" style="left:50px;top:143px;width:1531px;height:29px;background:#ffffff;border-bottom:1px dotted #c8b89a"></div>
<div class="a" style="left:127px;top:143px;width:0;height:29px;border-left:1px dotted #c8b89a"></div>
<div class="a" style="left:204px;top:143px;width:0;height:29px;border-left:1px dotted #c8b89a"></div>
<div class="a" style="left:434px;top:143px;width:0;height:29px;border-left:1px dotted #c8b89a"></div>
<div class="a" style="left:589px;top:143px;width:0;height:29px;border-left:1px dotted #c8b89a"></div>
<div class="a" style="left:650px;top:143px;width:0;height:29px;border-left:1px dotted #c8b89a"></div>
<div class="a" style="left:742px;top:143px;width:0;height:29px;border-left:1px dotted #c8b89a"></div>
<div class="a" style="left:864px;top:143px;width:0;height:29px;border-left:1px dotted #c8b89a"></div>
<div class="a" style="left:986px;top:143px;width:0;height:29px;border-left:1px dotted #c8b89a"></div>
<div class="a" style="left:1108px;top:143px;width:0;height:29px;border-left:1px dotted #c8b89a"></div>
<div class="a" style="left:1183px;top:143px;width:0;height:29px;border-left:1px dotted #c8b89a"></div>
<div class="a" style="left:1305px;top:143px;width:0;height:29px;border-left:1px dotted #c8b89a"></div>
<div class="a" style="left:1428px;top:143px;width:0;height:29px;border-left:1px dotted #c8b89a"></div>
<div class="a" style="left:1504px;top:143px;width:0;height:29px;border-left:1px dotted #c8b89a"></div>
<div class="a nw" style="left:50px;top:152px;width:73px;text-align:right;font-size:10.5px;color:#222;font-weight:normal">1</div>
<div class="a nw" style="left:131px;top:152px;text-align:left;font-size:10.5px;color:#222;font-weight:normal">1</div>
<div class="a nw" style="left:208px;top:152px;text-align:left;font-size:10.5px;color:#222;font-weight:normal">project one</div>
<div class="a nw" style="left:438px;top:152px;text-align:left;font-size:10.5px;color:#222;font-weight:normal">Fixed Price</div>
<div class="a" style="left:592px;top:147px;width:55px;height:21px;border-radius:11px;background:#6a5acd"></div>
<div class="a nw" style="left:654px;top:152px;text-align:left;font-size:10.5px;color:#222;font-weight:normal">001-001</div>
<div class="a nw" style="left:746px;top:152px;text-align:left;font-size:10.5px;color:#222;font-weight:normal">client one</div>
<div class="a c nw" style="left:868px;top:147px;width:115px;height:21px;border-radius:11px;background:#ffa500;font-size:10.5px;line-height:21px;color:#000">recorded</div>
<div class="a c nw" style="left:990px;top:147px;width:115px;height:21px;border-radius:11px;background:#ffd700;font-size:10.5px;line-height:21px;color:#000">surveyed</div>
<div class="a c nw" style="left:1108px;top:149px;width:75px;font-size:10.5px;color:#222;font-weight:normal">26 %</div>
<div class="a" style="left:1112px;top:161px;width:69px;height:3px;background:#ffaaaa"></div>
<div class="a" style="left:1112px;top:161px;width:18px;height:3px;background:#a8f0a0"></div>
<div class="a nw" style="left:1188px;top:152px;text-align:left;font-size:10.5px;color:#222;font-weight:normal">29/02/2016</div>
<div class="a nw" style="left:1309px;top:152px;text-align:left;font-size:10.5px;color:#222;font-weight:normal">13/02/2019</div>
<div class="a" style="left:1460px;top:150px;width:12px;height:12px;background:linear-gradient(#f0f0f0,#fff);border:1px solid #c0c0c0"></div>
<div class="a" style="left:1536px;top:150px;width:12px;height:12px;background:linear-gradient(#f0f0f0,#fff);border:1px solid #c0c0c0"></div>
<div class="a" style="left:50px;top:172px;width:1531px;height:29px;background:#545081;border-bottom:1px dotted #c8b89a"></div>
<div class="a" style="left:127px;top:172px;width:0;height:29px;border-left:1px dotted #c8b89a"></div>
<div class="a" style="left:204px;top:172px;width:0;height:29px;border-left:1px dotted #c8b89a"></div>
<div class="a" style="left:434px;top:172px;width:0;height:29px;border-left:1px dotted #c8b89a"></div>
<div class="a" style="left:589px;top:172px;width:0;height:29px;border-left:1px dotted #c8b89a"></div>
<div class="a" style="left:650px;top:172px;width:0;height:29px;border-left:1px dotted #c8b89a"></div>
<div class="a" style="left:742px;top:172px;width:0;height:29px;border-left:1px dotted #c8b89a"></div>
<div class="a" style="left:864px;top:172px;width:0;height:29px;border-left:1px dotted #c8b89a"></div>
<div class="a" style="left:986px;top:172px;width:0;height:29px;border-left:1px dotted #c8b89a"></div>
<div class="a" style="left:1108px;top:172px;width:0;height:29px;border-left:1px dotted #c8b89a"></div>
<div class="a" style="left:1183px;top:172px;width:0;height:29px;border-left:1px dotted #c8b89a"></div>
<div class="a" style="left:1305px;top:172px;width:0;height:29px;border-left:1px dotted #c8b89a"></div>
<div class="a" style="left:1428px;top:172px;width:0;height:29px;border-left:1px dotted #c8b89a"></div>
<div class="a" style="left:1504px;top:172px;width:0;height:29px;border-left:1px dotted #c8b89a"></div>
<div class="a nw" style="left:50px;top:181px;width:73px;text-align:right;font-size:10.5px;color:#f0f0f5;font-weight:bold">2</div>
<div class="a nw" style="left:131px;top:181px;text-align:left;font-size:10.5px;color:#f0f0f5;font-weight:bold">1.1</div>
<div class="a nw" style="left:208px;top:181px;text-align:left;font-size:10.5px;color:#f0f0f5;font-weight:bold">project one - maintenance</div>
<div class="a nw" style="left:438px;top:181px;text-align:left;font-size:10.5px;color:#f0f0f5;font-weight:bold">Manual billed</div>
<div class="a" style="left:592px;top:176px;width:55px;height:21px;border-radius:11px;background:#6495ed"></div>
<div class="a nw" style="left:654px;top:181px;text-align:left;font-size:10.5px;color:#f0f0f5;font-weight:bold">001-001-1</div>
<div class="a nw" style="left:746px;top:181px;text-align:left;font-size:10.5px;color:#f0f0f5;font-weight:bold">client one</div>
<div class="a c nw" style="left:868px;top:176px;width:115px;height:21px;border-radius:11px;background:#ffa500;font-size:10.5px;line-height:21px;color:#000">recorded</div>
<div class="a c nw" style="left:990px;top:176px;width:115px;height:21px;border-radius:11px;background:#32cd32;font-size:10.5px;line-height:21px;color:#000">secured</div>
<div class="a c nw" style="left:1108px;top:178px;width:75px;font-size:10.5px;color:#f0f0f5;font-weight:bold">71 %</div>
<div class="a" style="left:1112px;top:190px;width:69px;height:3px;background:#ffaaaa"></div>
<div class="a" style="left:1112px;top:190px;width:49px;height:3px;background:#a8f0a0"></div>
<div class="a nw" style="left:1188px;top:181px;text-align:left;font-size:10.5px;color:#f0f0f5;font-weight:bold">29/02/2016</div>
<div class="a nw" style="left:1309px;top:181px;text-align:left;font-size:10.5px;color:#f0f0f5;font-weight:bold">13/02/2019</div>
<div class="a" style="left:1460px;top:179px;width:12px;height:12px;background:linear-gradient(#f0f0f0,#fff);border:1px solid #ddd"></div>
<div class="a" style="left:1536px;top:179px;width:12px;height:12px;background:linear-gradient(#f0f0f0,#fff);border:1px solid #ddd"></div>
<div class="a" style="left:50px;top:201px;width:1531px;height:29px;background:#ffffff;border-bottom:1px dotted #c8b89a"></div>
<div class="a" style="left:127px;top:201px;width:0;height:29px;border-left:1px dotted #c8b89a"></div>
<div class="a" style="left:204px;top:201px;width:0;height:29px;border-left:1px dotted #c8b89a"></div>
<div class="a" style="left:434px;top:201px;width:0;height:29px;border-left:1px dotted #c8b89a"></div>
<div class="a" style="left:589px;top:201px;width:0;height:29px;border-left:1px dotted #c8b89a"></div>
<div class="a" style="left:650px;top:201px;width:0;height:29px;border-left:1px dotted #c8b89a"></div>
<div class="a" style="left:742px;top:201px;width:0;height:29px;border-left:1px dotted #c8b89a"></div>
<div class="a" style="left:864px;top:201px;width:0;height:29px;border-left:1px dotted #c8b89a"></div>
<div class="a" style="left:986px;top:201px;width:0;height:29px;border-left:1px dotted #c8b89a"></div>
<div class="a" style="left:1108px;top:201px;width:0;height:29px;border-left:1px dotted #c8b89a"></div>
<div class="a" style="left:1183px;top:201px;width:0;height:29px;border-left:1px dotted #c8b89a"></div>
<div class="a" style="left:1305px;top:201px;width:0;height:29px;border-left:1px dotted #c8b89a"></div>
<div class="a" style="left:1428px;top:201px;width:0;height:29px;border-left:1px dotted #c8b89a"></div>
<div class="a" style="left:1504px;top:201px;width:0;height:29px;border-left:1px dotted #c8b89a"></div>
<div class="a nw" style="left:50px;top:210px;width:73px;text-align:right;font-size:10.5px;color:#222;font-weight:normal">3</div>
<div class="a nw" style="left:131px;top:210px;text-align:left;font-size:10.5px;color:#222;font-weight:normal">1.2</div>
<div class="a nw" style="left:208px;top:210px;text-align:left;font-size:10.5px;color:#222;font-weight:normal">project one - developement</div>
<div class="a nw" style="left:438px;top:210px;text-align:left;font-size:10.5px;color:#222;font-weight:normal">Manual billed</div>
<div class="a" style="left:592px;top:205px;width:55px;height:21px;border-radius:11px;background:#87ceeb"></div>
<div class="a nw" style="left:654px;top:210px;text-align:left;font-size:10.5px;color:#222;font-weight:normal">001-001-2</div>
<div class="a nw" style="left:746px;top:210px;text-align:left;font-size:10.5px;color:#222;font-weight:normal">client one</div>
<div class="a c nw" style="left:868px;top:205px;width:115px;height:21px;border-radius:11px;background:#ffa500;font-size:10.5px;line-height:21px;color:#000">recorded</div>
<div class="a c nw" style="left:990px;top:205px;width:115px;height:21px;border-radius:11px;background:#ff0000;font-size:10.5px;line-height:21px;color:#fff">in danger</div>
<div class="a c nw" style="left:1108px;top:207px;width:75px;font-size:10.5px;color:#222;font-weight:normal">0 %</div>
<div class="a" style="left:1112px;top:219px;width:69px;height:3px;background:#ffaaaa"></div>
<div class="a nw" style="left:1188px;top:210px;text-align:left;font-size:10.5px;color:#222;font-weight:normal">08/12/2015</div>
<div class="a nw" style="left:1309px;top:210px;text-align:left;font-size:10.5px;color:#222;font-weight:normal">30/01/2019</div>
<div class="a" style="left:1460px;top:208px;width:12px;height:12px;background:linear-gradient(#f0f0f0,#fff);border:1px solid #c0c0c0"></div>
<div class="a" style="left:1536px;top:208px;width:12px;height:12px;background:linear-gradient(#f0f0f0,#fff);border:1px solid #c0c0c0"></div>
<div class="a" style="left:50px;top:230px;width:1531px;height:29px;background:#ebeaf1;border-bottom:1px dotted #c8b89a"></div>
<div class="a" style="left:127px;top:230px;width:0;height:29px;border-left:1px dotted #c8b89a"></div>
<div class="a" style="left:204px;top:230px;width:0;height:29px;border-left:1px dotted #c8b89a"></div>
<div class="a" style="left:434px;top:230px;width:0;height:29px;border-left:1px dotted #c8b89a"></div>
<div class="a" style="left:589px;top:230px;width:0;height:29px;border-left:1px dotted #c8b89a"></div>
<div class="a" style="left:650px;top:230px;width:0;height:29px;border-left:1px dotted #c8b89a"></div>
<div class="a" style="left:742px;top:230px;width:0;height:29px;border-left:1px dotted #c8b89a"></div>
<div class="a" style="left:864px;top:230px;width:0;height:29px;border-left:1px dotted #c8b89a"></div>
<div class="a" style="left:986px;top:230px;width:0;height:29px;border-left:1px dotted #c8b89a"></div>
<div class="a" style="left:1108px;top:230px;width:0;height:29px;border-left:1px dotted #c8b89a"></div>
<div class="a" style="left:1183px;top:230px;width:0;height:29px;border-left:1px dotted #c8b89a"></div>
<div class="a" style="left:1305px;top:230px;width:0;height:29px;border-left:1px dotted #c8b89a"></div>
<div class="a" style="left:1428px;top:230px;width:0;height:29px;border-left:1px dotted #c8b89a"></div>
<div class="a" style="left:1504px;top:230px;width:0;height:29px;border-left:1px dotted #c8b89a"></div>
<div class="a nw" style="left:50px;top:239px;width:73px;text-align:right;font-size:10.5px;color:#222;font-weight:normal">4</div>
<div class="a nw" style="left:131px;top:239px;text-align:left;font-size:10.5px;color:#222;font-weight:normal">2</div>
<div class="a nw" style="left:208px;top:239px;text-align:left;font-size:10.5px;color:#222;font-weight:normal">project two</div>
<div class="a nw" style="left:438px;top:239px;text-align:left;font-size:10.5px;color:#222;font-weight:normal">Time &amp; Materials</div>
<div class="a" style="left:592px;top:234px;width:55px;height:21px;border-radius:11px;background:#b22222"></div>
<div class="a nw" style="left:654px;top:239px;text-align:left;font-size:10.5px;color:#222;font-weight:normal">002-002</div>
<div class="a nw" style="left:746px;top:239px;text-align:left;font-size:10.5px;color:#222;font-weight:normal">client two</div>
<div class="a c nw" style="left:868px;top:234px;width:115px;height:21px;border-radius:11px;background:#ffa500;font-size:10.5px;line-height:21px;color:#000">recorded</div>
<div class="a c nw" style="left:990px;top:234px;width:115px;height:21px;border-radius:11px;background:#32cd32;font-size:10.5px;line-height:21px;color:#000">secured</div>
<div class="a c nw" style="left:1108px;top:236px;width:75px;font-size:10.5px;color:#222;font-weight:normal">0 %</div>
<div class="a" style="left:1112px;top:248px;width:69px;height:3px;background:#ffaaaa"></div>
<div class="a nw" style="left:1188px;top:239px;text-align:left;font-size:10.5px;color:#222;font-weight:normal">29/02/2016</div>
<div class="a nw" style="left:1309px;top:239px;text-align:left;font-size:10.5px;color:#222;font-weight:normal">24/01/2019</div>
<div class="a" style="left:1460px;top:237px;width:12px;height:12px;background:linear-gradient(#f0f0f0,#fff);border:1px solid #c0c0c0"></div>
<div class="a" style="left:1536px;top:237px;width:12px;height:12px;background:linear-gradient(#f0f0f0,#fff);border:1px solid #c0c0c0"></div>
<div class="a" style="left:50px;top:259px;width:1531px;height:29px;background:#ffffff;border-bottom:1px dotted #c8b89a"></div>
<div class="a" style="left:127px;top:259px;width:0;height:29px;border-left:1px dotted #c8b89a"></div>
<div class="a" style="left:204px;top:259px;width:0;height:29px;border-left:1px dotted #c8b89a"></div>
<div class="a" style="left:434px;top:259px;width:0;height:29px;border-left:1px dotted #c8b89a"></div>
<div class="a" style="left:589px;top:259px;width:0;height:29px;border-left:1px dotted #c8b89a"></div>
<div class="a" style="left:650px;top:259px;width:0;height:29px;border-left:1px dotted #c8b89a"></div>
<div class="a" style="left:742px;top:259px;width:0;height:29px;border-left:1px dotted #c8b89a"></div>
<div class="a" style="left:864px;top:259px;width:0;height:29px;border-left:1px dotted #c8b89a"></div>
<div class="a" style="left:986px;top:259px;width:0;height:29px;border-left:1px dotted #c8b89a"></div>
<div class="a" style="left:1108px;top:259px;width:0;height:29px;border-left:1px dotted #c8b89a"></div>
<div class="a" style="left:1183px;top:259px;width:0;height:29px;border-left:1px dotted #c8b89a"></div>
<div class="a" style="left:1305px;top:259px;width:0;height:29px;border-left:1px dotted #c8b89a"></div>
<div class="a" style="left:1428px;top:259px;width:0;height:29px;border-left:1px dotted #c8b89a"></div>
<div class="a" style="left:1504px;top:259px;width:0;height:29px;border-left:1px dotted #c8b89a"></div>
<div class="a nw" style="left:50px;top:268px;width:73px;text-align:right;font-size:10.5px;color:#222;font-weight:normal">9</div>
<div class="a nw" style="left:131px;top:268px;text-align:left;font-size:10.5px;color:#222;font-weight:normal">6</div>
<div class="a nw" style="left:208px;top:268px;text-align:left;font-size:10.5px;color:#222;font-weight:normal">adm 2</div>
<div class="a nw" style="left:438px;top:268px;text-align:left;font-size:10.5px;color:#222;font-weight:normal">Administrative</div>
<div class="a nw" style="left:654px;top:268px;text-align:left;font-size:10.5px;color:#222;font-weight:normal"></div>
<div class="a nw" style="left:746px;top:268px;text-align:left;font-size:10.5px;color:#222;font-weight:normal"></div>
<div class="a c nw" style="left:868px;top:263px;width:115px;height:21px;border-radius:11px;background:#ffa500;font-size:10.5px;line-height:21px;color:#000">recorded</div>
<div class="a c nw" style="left:1108px;top:265px;width:75px;font-size:10.5px;color:#222;font-weight:normal">100 %</div>
<div class="a" style="left:1112px;top:277px;width:69px;height:3px;background:#ffaaaa"></div>
<div class="a" style="left:1112px;top:277px;width:69px;height:3px;background:#a8f0a0"></div>
<div class="a nw" style="left:1188px;top:268px;text-align:left;font-size:10.5px;color:#222;font-weight:normal"></div>
<div class="a nw" style="left:1309px;top:268px;text-align:left;font-size:10.5px;color:#222;font-weight:normal">12/02/2021</div>
<div class="a" style="left:1460px;top:266px;width:12px;height:12px;background:linear-gradient(#f0f0f0,#fff);border:1px solid #c0c0c0"></div>
<div class="a" style="left:1536px;top:266px;width:12px;height:12px;background:linear-gradient(#f0f0f0,#fff);border:1px solid #c0c0c0"></div>
<div class="a" style="left:50px;top:288px;width:1531px;height:29px;background:#ebeaf1;border-bottom:1px dotted #c8b89a"></div>
<div class="a" style="left:127px;top:288px;width:0;height:29px;border-left:1px dotted #c8b89a"></div>
<div class="a" style="left:204px;top:288px;width:0;height:29px;border-left:1px dotted #c8b89a"></div>
<div class="a" style="left:434px;top:288px;width:0;height:29px;border-left:1px dotted #c8b89a"></div>
<div class="a" style="left:589px;top:288px;width:0;height:29px;border-left:1px dotted #c8b89a"></div>
<div class="a" style="left:650px;top:288px;width:0;height:29px;border-left:1px dotted #c8b89a"></div>
<div class="a" style="left:742px;top:288px;width:0;height:29px;border-left:1px dotted #c8b89a"></div>
<div class="a" style="left:864px;top:288px;width:0;height:29px;border-left:1px dotted #c8b89a"></div>
<div class="a" style="left:986px;top:288px;width:0;height:29px;border-left:1px dotted #c8b89a"></div>
<div class="a" style="left:1108px;top:288px;width:0;height:29px;border-left:1px dotted #c8b89a"></div>
<div class="a" style="left:1183px;top:288px;width:0;height:29px;border-left:1px dotted #c8b89a"></div>
<div class="a" style="left:1305px;top:288px;width:0;height:29px;border-left:1px dotted #c8b89a"></div>
<div class="a" style="left:1428px;top:288px;width:0;height:29px;border-left:1px dotted #c8b89a"></div>
<div class="a" style="left:1504px;top:288px;width:0;height:29px;border-left:1px dotted #c8b89a"></div>
<div class="a nw" style="left:50px;top:297px;width:73px;text-align:right;font-size:10.5px;color:#222;font-weight:normal">11</div>
<div class="a nw" style="left:131px;top:297px;text-align:left;font-size:10.5px;color:#222;font-weight:normal">7</div>
<div class="a nw" style="left:208px;top:297px;text-align:left;font-size:10.5px;color:#222;font-weight:normal">Mission impossible</div>
<div class="a nw" style="left:438px;top:297px;text-align:left;font-size:10.5px;color:#222;font-weight:normal">Manual billed</div>
<div class="a nw" style="left:654px;top:297px;text-align:left;font-size:10.5px;color:#222;font-weight:normal"></div>
<div class="a nw" style="left:746px;top:297px;text-align:left;font-size:10.5px;color:#222;font-weight:normal"></div>
<div class="a c nw" style="left:868px;top:292px;width:115px;height:21px;border-radius:11px;background:#ffa500;font-size:10.5px;line-height:21px;color:#000">recorded</div>
<div class="a c nw" style="left:1108px;top:294px;width:75px;font-size:10.5px;color:#222;font-weight:normal">0 %</div>
<div class="a" style="left:1112px;top:306px;width:69px;height:3px;background:#ffaaaa"></div>
<div class="a nw" style="left:1188px;top:297px;text-align:left;font-size:10.5px;color:#222;font-weight:normal"></div>
<div class="a nw" style="left:1309px;top:297px;text-align:left;font-size:10.5px;color:#222;font-weight:normal">24/01/2019</div>
<div class="a" style="left:1460px;top:295px;width:12px;height:12px;background:linear-gradient(#f0f0f0,#fff);border:1px solid #c0c0c0"></div>
<div class="a" style="left:1536px;top:295px;width:12px;height:12px;background:linear-gradient(#f0f0f0,#fff);border:1px solid #c0c0c0"></div>
<div class="a" style="left:50px;top:317px;width:1531px;height:29px;background:#ffffff;border-bottom:1px dotted #c8b89a"></div>
<div class="a" style="left:127px;top:317px;width:0;height:29px;border-left:1px dotted #c8b89a"></div>
<div class="a" style="left:204px;top:317px;width:0;height:29px;border-left:1px dotted #c8b89a"></div>
<div class="a" style="left:434px;top:317px;width:0;height:29px;border-left:1px dotted #c8b89a"></div>
<div class="a" style="left:589px;top:317px;width:0;height:29px;border-left:1px dotted #c8b89a"></div>
<div class="a" style="left:650px;top:317px;width:0;height:29px;border-left:1px dotted #c8b89a"></div>
<div class="a" style="left:742px;top:317px;width:0;height:29px;border-left:1px dotted #c8b89a"></div>
<div class="a" style="left:864px;top:317px;width:0;height:29px;border-left:1px dotted #c8b89a"></div>
<div class="a" style="left:986px;top:317px;width:0;height:29px;border-left:1px dotted #c8b89a"></div>
<div class="a" style="left:1108px;top:317px;width:0;height:29px;border-left:1px dotted #c8b89a"></div>
<div class="a" style="left:1183px;top:317px;width:0;height:29px;border-left:1px dotted #c8b89a"></div>
<div class="a" style="left:1305px;top:317px;width:0;height:29px;border-left:1px dotted #c8b89a"></div>
<div class="a" style="left:1428px;top:317px;width:0;height:29px;border-left:1px dotted #c8b89a"></div>
<div class="a" style="left:1504px;top:317px;width:0;height:29px;border-left:1px dotted #c8b89a"></div>
<div class="a nw" style="left:50px;top:326px;width:73px;text-align:right;font-size:10.5px;color:#222;font-weight:normal">12</div>
<div class="a nw" style="left:131px;top:326px;text-align:left;font-size:10.5px;color:#222;font-weight:normal">8.1</div>
<div class="a nw" style="left:208px;top:326px;text-align:left;font-size:10.5px;color:#222;font-weight:normal">Mission 2</div>
<div class="a nw" style="left:438px;top:326px;text-align:left;font-size:10.5px;color:#222;font-weight:normal">Manual billed</div>
<div class="a nw" style="left:654px;top:326px;text-align:left;font-size:10.5px;color:#222;font-weight:normal"></div>
<div class="a nw" style="left:746px;top:326px;text-align:left;font-size:10.5px;color:#222;font-weight:normal"></div>
<div class="a c nw" style="left:868px;top:321px;width:115px;height:21px;border-radius:11px;background:#ffa500;font-size:10.5px;line-height:21px;color:#000">recorded</div>
<div class="a c nw" style="left:1108px;top:323px;width:75px;font-size:10.5px;color:#222;font-weight:normal">0 %</div>
<div class="a" style="left:1112px;top:335px;width:69px;height:3px;background:#ffaaaa"></div>
<div class="a nw" style="left:1188px;top:326px;text-align:left;font-size:10.5px;color:#222;font-weight:normal"></div>
<div class="a nw" style="left:1309px;top:326px;text-align:left;font-size:10.5px;color:#222;font-weight:normal">24/01/2019</div>
<div class="a" style="left:1460px;top:324px;width:12px;height:12px;background:linear-gradient(#f0f0f0,#fff);border:1px solid #c0c0c0"></div>
<div class="a" style="left:1536px;top:324px;width:12px;height:12px;background:linear-gradient(#f0f0f0,#fff);border:1px solid #c0c0c0"></div>
<div class="a" style="left:50px;top:346px;width:1531px;height:29px;background:#ebeaf1;border-bottom:1px dotted #c8b89a"></div>
<div class="a" style="left:127px;top:346px;width:0;height:29px;border-left:1px dotted #c8b89a"></div>
<div class="a" style="left:204px;top:346px;width:0;height:29px;border-left:1px dotted #c8b89a"></div>
<div class="a" style="left:434px;top:346px;width:0;height:29px;border-left:1px dotted #c8b89a"></div>
<div class="a" style="left:589px;top:346px;width:0;height:29px;border-left:1px dotted #c8b89a"></div>
<div class="a" style="left:650px;top:346px;width:0;height:29px;border-left:1px dotted #c8b89a"></div>
<div class="a" style="left:742px;top:346px;width:0;height:29px;border-left:1px dotted #c8b89a"></div>
<div class="a" style="left:864px;top:346px;width:0;height:29px;border-left:1px dotted #c8b89a"></div>
<div class="a" style="left:986px;top:346px;width:0;height:29px;border-left:1px dotted #c8b89a"></div>
<div class="a" style="left:1108px;top:346px;width:0;height:29px;border-left:1px dotted #c8b89a"></div>
<div class="a" style="left:1183px;top:346px;width:0;height:29px;border-left:1px dotted #c8b89a"></div>
<div class="a" style="left:1305px;top:346px;width:0;height:29px;border-left:1px dotted #c8b89a"></div>
<div class="a" style="left:1428px;top:346px;width:0;height:29px;border-left:1px dotted #c8b89a"></div>
<div class="a" style="left:1504px;top:346px;width:0;height:29px;border-left:1px dotted #c8b89a"></div>
<div class="a nw" style="left:50px;top:355px;width:73px;text-align:right;font-size:10.5px;color:#222;font-weight:normal">13</div>
<div class="a nw" style="left:131px;top:355px;text-align:left;font-size:10.5px;color:#222;font-weight:normal">8.1.1</div>
<div class="a nw" style="left:208px;top:355px;text-align:left;font-size:10.5px;color:#222;font-weight:normal">Mission 2.1</div>
<div class="a nw" style="left:438px;top:355px;text-align:left;font-size:10.5px;color:#222;font-weight:normal">Manual billed</div>
<div class="a nw" style="left:654px;top:355px;text-align:left;font-size:10.5px;color:#222;font-weight:normal"></div>
<div class="a nw" style="left:746px;top:355px;text-align:left;font-size:10.5px;color:#222;font-weight:normal"></div>
<div class="a c nw" style="left:868px;top:350px;width:115px;height:21px;border-radius:11px;background:#ffa500;font-size:10.5px;line-height:21px;color:#000">recorded</div>
<div class="a c nw" style="left:1108px;top:352px;width:75px;font-size:10.5px;color:#222;font-weight:normal">0 %</div>
<div class="a" style="left:1112px;top:364px;width:69px;height:3px;background:#ffaaaa"></div>
<div class="a nw" style="left:1188px;top:355px;text-align:left;font-size:10.5px;color:#222;font-weight:normal"></div>
<div class="a nw" style="left:1309px;top:355px;text-align:left;font-size:10.5px;color:#222;font-weight:normal">24/01/2019</div>
<div class="a" style="left:1460px;top:353px;width:12px;height:12px;background:linear-gradient(#f0f0f0,#fff);border:1px solid #c0c0c0"></div>
<div class="a" style="left:1536px;top:353px;width:12px;height:12px;background:linear-gradient(#f0f0f0,#fff);border:1px solid #c0c0c0"></div>
<div class="a" style="left:50px;top:375px;width:1531px;height:12px;background:#ffffff;border-bottom:1px dotted #c8b89a"></div>
<div class="a" style="left:127px;top:375px;width:0;height:12px;border-left:1px dotted #c8b89a"></div>
<div class="a" style="left:204px;top:375px;width:0;height:12px;border-left:1px dotted #c8b89a"></div>
<div class="a" style="left:434px;top:375px;width:0;height:12px;border-left:1px dotted #c8b89a"></div>
<div class="a" style="left:589px;top:375px;width:0;height:12px;border-left:1px dotted #c8b89a"></div>
<div class="a" style="left:650px;top:375px;width:0;height:12px;border-left:1px dotted #c8b89a"></div>
<div class="a" style="left:742px;top:375px;width:0;height:12px;border-left:1px dotted #c8b89a"></div>
<div class="a" style="left:864px;top:375px;width:0;height:12px;border-left:1px dotted #c8b89a"></div>
<div class="a" style="left:986px;top:375px;width:0;height:12px;border-left:1px dotted #c8b89a"></div>
<div class="a" style="left:1108px;top:375px;width:0;height:12px;border-left:1px dotted #c8b89a"></div>
<div class="a" style="left:1183px;top:375px;width:0;height:12px;border-left:1px dotted #c8b89a"></div>
<div class="a" style="left:1305px;top:375px;width:0;height:12px;border-left:1px dotted #c8b89a"></div>
<div class="a" style="left:1428px;top:375px;width:0;height:12px;border-left:1px dotted #c8b89a"></div>
<div class="a" style="left:1504px;top:375px;width:0;height:12px;border-left:1px dotted #c8b89a"></div>
<div class="a nw" style="left:50px;top:384px;width:73px;text-align:right;font-size:10.5px;color:#222;font-weight:normal"></div>
<div class="a nw" style="left:131px;top:384px;text-align:left;font-size:10.5px;color:#222;font-weight:normal"></div>
<div class="a nw" style="left:208px;top:384px;text-align:left;font-size:10.5px;color:#222;font-weight:normal"></div>
<div class="a nw" style="left:438px;top:384px;text-align:left;font-size:10.5px;color:#222;font-weight:normal">Manual billed</div>
<div class="a nw" style="left:654px;top:384px;text-align:left;font-size:10.5px;color:#222;font-weight:normal"></div>
<div class="a nw" style="left:746px;top:384px;text-align:left;font-size:10.5px;color:#222;font-weight:normal"></div>
<div class="a c nw" style="left:868px;top:379px;width:115px;height:21px;border-radius:11px;background:#ffa500;font-size:10.5px;line-height:21px;color:#000">recorded</div>
<div class="a c nw" style="left:1108px;top:381px;width:75px;font-size:10.5px;color:#222;font-weight:normal">0 %</div>
<div class="a" style="left:1112px;top:393px;width:69px;height:3px;background:#ffaaaa"></div>
<div class="a nw" style="left:1188px;top:384px;text-align:left;font-size:10.5px;color:#222;font-weight:normal"></div>
<div class="a nw" style="left:1309px;top:384px;text-align:left;font-size:10.5px;color:#222;font-weight:normal">24/01/2019</div>
<div class="a" style="left:1460px;top:382px;width:12px;height:12px;background:linear-gradient(#f0f0f0,#fff);border:1px solid #c0c0c0"></div>
<div class="a" style="left:1536px;top:382px;width:12px;height:12px;background:linear-gradient(#f0f0f0,#fff);border:1px solid #c0c0c0"></div>
<div class="a" style="left:50px;top:387px;width:1544px;height:5px;background:#545081"></div>
<div class="a" style="left:1581px;top:117px;width:13px;height:270px;background:#dcdae8"></div>
<div class="a" style="left:1581px;top:117px;width:13px;height:26px;background:#e8e8e8"></div>
<div class="a" style="left:1581px;top:143px;width:12px;height:121px;background:#7d789f"></div>
<div class="a" style="left:807px;top:387px;width:20px;height:3px;background:repeating-linear-gradient(90deg,#fff 0 3px,transparent 3px 4px)"></div>
<div class="a" style="left:50px;top:387px;width:1544px;height:41px;background:#545081"></div>
<div class="a" style="left:50px;top:392px;width:1544px;height:1px;background:#dcdbe6"></div>
<div class="a" style="left:50px;top:393px;width:43px;height:35px;background:#cfcce0"></div>
<svg class="a" style="left:54px;top:394px" width="33" height="33" viewBox="0 0 24 24"><polygon points="20.94,13.08 23.52,14.58 22.00,18.27 19.11,17.52 18.64,18.08 18.12,18.60 17.56,19.08 18.32,21.96 14.64,23.50 13.13,20.93 12.39,20.99 11.66,20.99 10.92,20.94 9.42,23.52 5.73,22.00 6.48,19.11 5.92,18.64 5.40,18.12 4.92,17.56 2.04,18.32 0.50,14.64 3.07,13.13 3.01,12.39 3.01,11.66 3.06,10.92 0.48,9.42 2.00,5.73 4.89,6.48 5.36,5.92 5.88,5.40 6.44,4.92 5.68,2.04 9.36,0.50 10.87,3.07 11.61,3.01 12.34,3.01 13.08,3.06 14.58,0.48 18.27,2.00 17.52,4.89 18.08,5.36 18.60,5.88 19.08,6.44 21.96,5.68 23.50,9.36 20.93,10.87 20.99,11.61 20.99,12.34" fill="#545081"/><circle cx="12" cy="12" r="3.4" fill="#cfcce0"/></svg>
<div class="a w b nw" style="left:98px;top:401px;font-size:18px;letter-spacing:.8px">Projet&nbsp;&nbsp;#2 - project one - maintenance</div>
<div class="a c nw" style="left:671px;top:399px;width:119px;height:23px;border-radius:12px;background:#ffa500;border:1px solid #c8c4d8;font-size:11px;line-height:21px;color:#000">recorded</div>
<div class="a" style="left:797px;top:396px;width:32px;height:29px;background:#fff;border:2px solid #f06a6a;border-top:6px solid #f06a6a;border-radius:3px"></div>
<div class="a c nw" style="left:797px;top:401px;width:32px;font-size:9px;line-height:10px;color:#333">13/02<br>2019</div>
<div class="a" style="left:804px;top:393px;width:2px;height:5px;background:#fff"></div><div class="a" style="left:820px;top:393px;width:2px;height:5px;background:#fff"></div>
<div class="a" style="left:871px;top:393px;width:32px;height:32px;border-radius:50%;background:#16a085;border:1px solid #e8e8f0"></div>
<div class="a w c nw" style="left:871px;top:396px;width:32px;font-size:22px;line-height:26px">E</div>
<div class="a" style="left:967px;top:396px;width:32px;height:28px;background:#a8a5c4;border:1px solid #f0f0f5"></div>
<svg class="a" style="left:971px;top:398px" width="24" height="24" viewBox="0 0 24 24"><path d="M5 2 H14 L19 7 V21 H5z" fill="none" stroke="#545081" stroke-width="2" stroke-linejoin="round"/><path d="M14 2 V7 H19" fill="none" stroke="#545081" stroke-width="2"/><circle cx="19" cy="19" r="4.5" fill="#545081"/><path d="M19 16.5v5M16.5 19h5" stroke="#a8a5c4" stroke-width="1.6"/></svg>
<div class="a" style="left:1003px;top:396px;width:32px;height:28px;background:#a8a5c4;border:1px solid #f0f0f5"></div>
<svg class="a" style="left:1007px;top:398px" width="24" height="24" viewBox="0 0 24 24"><path d="M3 3 H18 L21 6 V21 H3z" fill="none" stroke="#545081" stroke-width="2.2"/><rect x="7" y="3" width="9" height="6" fill="#545081"/><rect x="12.5" y="4" width="2" height="4" fill="#a8a5c4"/><rect x="5" y="12" width="14" height="9" fill="#545081"/><rect x="7" y="14" width="10" height="7" fill="#a8a5c4"/></svg>
<div class="a" style="left:1039px;top:396px;width:32px;height:28px;background:#a8a5c4;border:1px solid #f0f0f5"></div>
<svg class="a" style="left:1043px;top:398px" width="24" height="24" viewBox="0 0 24 24"><rect x="6" y="2" width="12" height="6" fill="none" stroke="#545081" stroke-width="2"/><rect x="1" y="8" width="22" height="10" rx="2" fill="#545081"/><rect x="6" y="14" width="12" height="8" fill="#a8a5c4" stroke="#545081" stroke-width="2"/><rect x="8" y="17" width="8" height="1.5" fill="#545081"/><circle cx="19" cy="11" r="1" fill="#a8a5c4"/></svg>
<div class="a" style="left:1075px;top:396px;width:32px;height:28px;background:#a8a5c4;border:1px solid #f0f0f5"></div>
<svg class="a" style="left:1079px;top:398px" width="24" height="24" viewBox="0 0 24 24"><path d="M5 2 H14 L19 7 V22 H5z" fill="none" stroke="#545081" stroke-width="2" stroke-linejoin="round"/><path d="M14 2 V7 H19" fill="none" stroke="#545081" stroke-width="1.8"/><path d="M12 9 Q11 14 8 18 M12 9 Q13 14 16 17 M8 17 Q12 14 16 17" fill="none" stroke="#545081" stroke-width="1.4"/></svg>
<div class="a" style="left:1111px;top:396px;width:32px;height:28px;background:#a8a5c4;border:1px solid #f0f0f5"></div>
<svg class="a" style="left:1115px;top:398px" width="24" height="24" viewBox="0 0 24 24"><path d="M2 2 H10 L13 5 V17 H2z" fill="none" stroke="#545081" stroke-width="1.8"/><path d="M9 7 H17 L21 11 V22 H9z" fill="#a8a5c4" stroke="#545081" stroke-width="1.8"/><path d="M12 13h6M12 16h6M12 19h6" stroke="#545081" stroke-width="1.4"/></svg>
<div class="a" style="left:1147px;top:396px;width:32px;height:28px;background:#a8a5c4;border:1px solid #f0f0f5"></div>
<svg class="a" style="left:1151px;top:398px" width="24" height="24" viewBox="0 0 24 24"><path d="M19 8 A8 8 0 0 0 5 9" fill="none" stroke="#545081" stroke-width="2.6"/><path d="M5 15 A8 8 0 0 0 19 15" fill="none" stroke="#545081" stroke-width="2.6"/><path d="M15 8 L21 9 L20 3z" fill="#545081"/><path d="M9 16 L3 15 L4 21z" fill="#545081"/></svg>
<div class="a" style="left:1183px;top:396px;width:32px;height:28px;background:#a8a5c4;border:1px solid #f0f0f5"></div>
<svg class="a" style="left:1187px;top:398px" width="24" height="24" viewBox="0 0 24 24"><rect x="4" y="4" width="16" height="2.5" fill="#545081"/><rect x="9" y="1.5" width="6" height="3" fill="none" stroke="#545081" stroke-width="1.6"/><path d="M6 7 V21 Q6 22 7 22 H17 Q18 22 18 21 V7" fill="none" stroke="#545081" stroke-width="2"/><path d="M9.5 9.5V19M12 9.5V19M14.5 9.5V19" stroke="#545081" stroke-width="1.5"/></svg>
<div class="a" style="left:1219px;top:396px;width:32px;height:28px;background:#a8a5c4;border:1px solid #f0f0f5"></div>
<svg class="a" style="left:1223px;top:398px" width="24" height="24" viewBox="0 0 24 24"><rect x="1.5" y="4.5" width="21" height="15" rx="1.5" fill="none" stroke="#545081" stroke-width="2.2"/><path d="M2 5 L12 13 L22 5 M2 19 L9 12 M22 19 L15 12" fill="none" stroke="#545081" stroke-width="2"/></svg>
<div class="a" style="left:1255px;top:396px;width:32px;height:28px;background:#a8a5c4;border:1px solid #f0f0f5"></div>
<svg class="a" style="left:1259px;top:398px" width="24" height="24" viewBox="0 0 24 24"><circle cx="5" cy="19" r="3" fill="#545081"/><path d="M2 10 A12 12 0 0 1 14 22" fill="none" stroke="#545081" stroke-width="3.2"/><path d="M2 2 A20 20 0 0 1 22 22" fill="none" stroke="#545081" stroke-width="3.2"/></svg>
<div class="a" style="left:1291px;top:396px;width:32px;height:28px;background:#a8a5c4;border:1px solid #f0f0f5"></div>
<svg class="a" style="left:1295px;top:398px" width="24" height="24" viewBox="0 0 24 24"><path d="M9 1 H20 L23 4 V14 H9z" fill="none" stroke="#545081" stroke-width="1.8"/><rect x="13" y="1" width="6" height="4" fill="#545081"/><path d="M1 10 H12 L15 13 V23 H1z" fill="#a8a5c4" stroke="#545081" stroke-width="1.8"/><rect x="4" y="10" width="6" height="4" fill="#545081"/><rect x="3" y="17" width="10" height="6" fill="#545081"/></svg>
<div class="a" style="left:1328px;top:396px;width:110px;height:28px;background:#a8a5c4;border:1px solid #e8e8f0;border-radius:4px"></div>
<div class="a" style="left:1331px;top:399px;width:104px;height:22px;border:1px dashed #e0e0e8;border-radius:3px"></div>
<div class="a c nw" style="left:1328px;top:400px;width:110px;font-size:10px;line-height:10px;color:#222">Fichier attaché<br><i style="font-size:9px;color:#555">(déplacer les fichiers ici)</i></div>
<div class="a" style="left:50px;top:428px;width:1544px;height:544px;background:#f9f9f9"></div>
<div class="a nw r" style="left:-103px;top:438px;width:300px;font-size:12px;color:#5b587e">nom :</div>
<div class="a nw r" style="left:-103px;top:461px;width:300px;font-size:12px;color:#5b587e">type :</div>
<div class="a nw r" style="left:-103px;top:484px;width:300px;font-size:12px;color:#5b587e">organisation :</div>
<div class="a nw r" style="left:-103px;top:507px;width:300px;font-size:12px;color:#5b587e">catégorie :</div>
<div class="a nw r" style="left:-103px;top:530px;width:300px;font-size:12px;color:#5b587e">client :</div>
<div class="a nw r" style="left:-103px;top:553px;width:300px;font-size:12px;color:#5b587e">contact facturation :</div>
<div class="a nw r" style="left:-103px;top:576px;width:300px;font-size:12px;color:#5b587e">code projet :</div>
<div class="a nw r" style="left:-103px;top:599px;width:300px;font-size:12px;color:#5b587e">code contrat :</div>
<div class="a nw r" style="left:-103px;top:622px;width:300px;font-size:12px;color:#5b587e">code client :</div>
<div class="a nw r" style="left:-127px;top:645px;width:300px;font-size:12px;color:#5b587e">est sous projet de</div>
<div class="a nw r" style="left:-103px;top:668px;width:300px;font-size:12px;color:#5b587e">sponsor :</div>
<div class="a nw r" style="left:-127px;top:691px;width:300px;font-size:12px;color:#5b587e">manager</div>
<div class="a nw r" style="left:-103px;top:714px;width:300px;font-size:12px;color:#5b587e">couleur :</div>
<div class="a" style="left:203px;top:434px;width:452px;height:20px;background:linear-gradient(#ececec,#fff 45%);border:1px solid #b4b4b4"></div><div class="a" style="left:203px;top:434px;width:3px;height:20px;background:#ff0000"></div><div class="a nw" style="left:210px;top:438px;font-size:11.5px;color:#111">project one - maintenance</div>
<div class="a" style="left:203px;top:457px;width:402px;height:20px;background:linear-gradient(#ececec,#fff 45%);border:1px solid #b4b4b4"></div><div class="a" style="left:203px;top:457px;width:3px;height:20px;background:#ff0000"></div><div class="a nw" style="left:210px;top:461px;font-size:11.5px;color:#111">Manual billed</div><div class="a" style="left:586px;top:457px;width:19px;height:20px;background:#cfcce0;border:1px solid #b4b4b4"></div><div class="a" style="left:591.5px;top:465.0px;width:0;height:0;border-left:4px solid transparent;border-right:4px solid transparent;border-top:5px solid #000"></div>
<svg class="a" style="left:609px;top:459px" width="18" height="18" viewBox="0 0 24 24"><circle cx="14" cy="10" r="6.5" fill="none" stroke="#545081" stroke-width="2.8"/><path d="M9.5 14.5 L3 21" stroke="#545081" stroke-width="3.6" stroke-linecap="round"/></svg>
<svg class="a" style="left:633px;top:459px" width="18" height="18" viewBox="0 0 24 24"><path d="M1 9 H11 V4 L19 12 L11 20 V15 H1z" fill="#545081"/><rect x="20" y="4" width="3" height="16" fill="#545081"/></svg>
<div class="a" style="left:203px;top:480px;width:450px;height:20px;background:linear-gradient(#ececec,#fff 45%);border:1px solid #b4b4b4"></div><div class="a" style="left:634px;top:480px;width:19px;height:20px;background:#cfcce0;border:1px solid #b4b4b4"></div><div class="a" style="left:639.5px;top:488.0px;width:0;height:0;border-left:4px solid transparent;border-right:4px solid transparent;border-top:5px solid #000"></div>
<div class="a" style="left:203px;top:503px;width:450px;height:20px;background:linear-gradient(#ececec,#fff 45%);border:1px solid #b4b4b4"></div><div class="a" style="left:634px;top:503px;width:19px;height:20px;background:#cfcce0;border:1px solid #b4b4b4"></div><div class="a" style="left:639.5px;top:511.0px;width:0;height:0;border-left:4px solid transparent;border-right:4px solid transparent;border-top:5px solid #000"></div>
<div class="a" style="left:203px;top:526px;width:450px;height:20px;background:linear-gradient(#ececec,#fff 45%);border:1px solid #b4b4b4"></div><div class="a nw" style="left:208px;top:530px;font-size:11.5px;color:#111">client one</div><div class="a" style="left:634px;top:526px;width:19px;height:20px;background:#cfcce0;border:1px solid #b4b4b4"></div><div class="a" style="left:639.5px;top:534.0px;width:0;height:0;border-left:4px solid transparent;border-right:4px solid transparent;border-top:5px solid #000"></div>
<div class="a" style="left:203px;top:549px;width:450px;height:20px;background:linear-gradient(#ececec,#fff 45%);border:1px solid #b4b4b4"></div><div class="a" style="left:634px;top:549px;width:19px;height:20px;background:#cfcce0;border:1px solid #b4b4b4"></div><div class="a" style="left:639.5px;top:557.0px;width:0;height:0;border-left:4px solid transparent;border-right:4px solid transparent;border-top:5px solid #000"></div>
<div class="a" style="left:203px;top:572px;width:199px;height:20px;background:linear-gradient(#ececec,#fff 45%);border:1px solid #b4b4b4"></div><div class="a nw" style="left:208px;top:576px;font-size:11.5px;color:#111">001-001-1</div>
<div class="a" style="left:203px;top:595px;width:199px;height:20px;background:linear-gradient(#ececec,#fff 45%);border:1px solid #b4b4b4"></div><div class="a nw" style="left:208px;top:599px;font-size:11.5px;color:#111">X23-472-722</div>
<div class="a" style="left:203px;top:618px;width:199px;height:20px;background:linear-gradient(#ececec,#fff 45%);border:1px solid #b4b4b4"></div>
<div class="a" style="left:182px;top:641px;width:20px;height:20px;border-radius:50%;background:#6a5acd;border:1px solid #ccc"></div>
<div class="a" style="left:203px;top:641px;width:400px;height:20px;background:linear-gradient(#ececec,#fff 45%);border:1px solid #b4b4b4"></div><div class="a nw" style="left:208px;top:645px;font-size:11.5px;color:#111">project one</div><div class="a" style="left:584px;top:641px;width:19px;height:20px;background:#cfcce0;border:1px solid #b4b4b4"></div><div class="a" style="left:589.5px;top:649.0px;width:0;height:0;border-left:4px solid transparent;border-right:4px solid transparent;border-top:5px solid #000"></div>
<svg class="a" style="left:609px;top:643px" width="18" height="18" viewBox="0 0 24 24"><circle cx="14" cy="10" r="6.5" fill="none" stroke="#545081" stroke-width="2.8"/><path d="M9.5 14.5 L3 21" stroke="#545081" stroke-width="3.6" stroke-linecap="round"/></svg>
<svg class="a" style="left:633px;top:643px" width="18" height="18" viewBox="0 0 24 24"><path d="M1 9 H11 V4 L19 12 L11 20 V15 H1z" fill="#545081"/><rect x="20" y="4" width="3" height="16" fill="#545081"/></svg>
<div class="a" style="left:203px;top:664px;width:450px;height:20px;background:linear-gradient(#ececec,#fff 45%);border:1px solid #b4b4b4"></div><div class="a" style="left:634px;top:664px;width:19px;height:20px;background:#cfcce0;border:1px solid #b4b4b4"></div><div class="a" style="left:639.5px;top:672.0px;width:0;height:0;border-left:4px solid transparent;border-right:4px solid transparent;border-top:5px solid #000"></div>
<div class="a" style="left:181px;top:687px;width:20px;height:20px;border-radius:50%;background:#16a085;border:1px solid #ccc"></div>
<div class="a w c nw" style="left:181px;top:688px;width:20px;font-size:14px;line-height:18px">E</div>
<div class="a" style="left:203px;top:687px;width:221px;height:20px;background:linear-gradient(#ececec,#fff 45%);border:1px solid #b4b4b4"></div><div class="a nw" style="left:208px;top:691px;font-size:11.5px;color:#111">external project leader one</div><div class="a" style="left:405px;top:687px;width:19px;height:20px;background:#cfcce0;border:1px solid #b4b4b4"></div><div class="a" style="left:410.5px;top:695.0px;width:0;height:0;border-left:4px solid transparent;border-right:4px solid transparent;border-top:5px solid #000"></div>
<div class="a" style="left:433px;top:686px;width:216px;height:21px;border-radius:10px;background:#cfcce0;border:1px solid #c4c2d4"></div>
<svg class="a" style="left:438px;top:688px" width="17" height="17" viewBox="0 0 24 24"><path d="M8 3 H21 V21 H8 V16" fill="none" stroke="#545081" stroke-width="2.4"/><path d="M8 8 V3" stroke="#545081" stroke-width="2.4"/><path d="M2 12 H14 M10 7 L15 12 L10 17" fill="none" stroke="#545081" stroke-width="2.4"/></svg>
<div class="a nw" style="left:459px;top:689px;font-size:11.5px;color:#6d6a8c">assigner à moi</div>
<div class="a" style="left:202px;top:711px;width:72px;height:20px;border-radius:10px;background:#6495ed"></div>
<div class="a" style="left:276px;top:711px;width:41px;height:21px;background:#cfcce0;border:1px solid #c4c2d4"></div>
<div class="a" style="left:281px;top:714px;width:16px;height:15px;background:conic-gradient(red,yellow,lime,cyan,blue,magenta,red);border:1px solid #222"></div>
<div class="a" style="left:302px;top:720px;width:0;height:0;border-left:4px solid transparent;border-right:4px solid transparent;border-top:5px solid #000"></div>
<div class="a" style="left:319px;top:711px;width:49px;height:21px;background:#cfcce0;border:1px solid #c4c2d4"></div>
<div class="a nw" style="left:325px;top:715px;font-size:12px;color:#222">effacer</div>
<div class="a nw" style="left:56px;top:735px;font-size:11.5px;color:#5b587e">description</div>
<div class="a" style="left:56px;top:748px;width:603px;height:222px;background:#fff;border:1px solid #c8c8c8"></div>
<div class="a" style="left:57px;top:749px;width:601px;height:75px;background:#cfcce0"></div>
<div class="a" style="left:65px;top:756px;width:120px;height:26px;background:#e2e0ea"></div>
<div class="a" style="left:187px;top:756px;width:237px;height:26px;background:#e2e0ea"></div>
<div class="a" style="left:426px;top:756px;width:72px;height:26px;background:#e2e0ea"></div>
<div class="a" style="left:501px;top:756px;width:59px;height:26px;background:#e2e0ea"></div>
<div class="a" style="left:65px;top:788px;width:133px;height:27px;background:#e2e0ea"></div>
<div class="a" style="left:201px;top:788px;width:199px;height:27px;background:#e2e0ea"></div>
<div class="a b nw" style="left:73px;top:761px;font-size:14px;color:#333">B</div>
<div class="a b nw" style="left:101px;top:761px;font-size:14px;font-style:italic;color:#333">I</div>
<div class="a b nw" style="left:129px;top:761px;font-size:14px;text-decoration:underline;color:#333">U</div>
<div class="a b nw" style="left:160px;top:760px;font-size:14px;font-style:italic;color:#333">T<span style="font-size:9px;font-style:normal">x</span></div>
<svg class="a" style="left:193px;top:762px" width="16" height="14" viewBox="0 0 16 14"><path d="M7 1h9M7 4.5h9M7 8h9M7 11.5h9M4 1v12" stroke="#333" stroke-width="1.4"/><path d="M0 5 L3 7 L0 9z" fill="#333"/></svg>
<svg class="a" style="left:221px;top:762px" width="16" height="14" viewBox="0 0 16 14"><path d="M7 1h9M7 4.5h9M7 8h9M7 11.5h9M4 1v12" stroke="#aaa" stroke-width="1.4"/><path d="M0 5 L3 7 L0 9z" fill="#aaa"/></svg>
<svg class="a" style="left:253px;top:763px" width="14" height="13" viewBox="0 0 14 13"><path d="M0 1h14M0 4.5h10M0 8h14M0 11.5h10" stroke="#333" stroke-width="2"/></svg>
<svg class="a" style="left:281px;top:763px" width="14" height="13" viewBox="0 0 14 13"><path d="M0 1h14M2 4.5h10M0 8h14M2 11.5h10" stroke="#333" stroke-width="2"/></svg>
<svg class="a" style="left:310px;top:763px" width="14" height="13" viewBox="0 0 14 13"><path d="M0 1h14M4 4.5h10M0 8h14M4 11.5h10" stroke="#333" stroke-width="2"/></svg>
<svg class="a" style="left:338px;top:763px" width="14" height="13" viewBox="0 0 14 13"><path d="M0 1h14M0 4.5h14M0 8h14M0 11.5h14" stroke="#333" stroke-width="2"/></svg>
<svg class="a" style="left:371px;top:762px" width="15" height="14" viewBox="0 0 15 14"><path d="M5 2h10M5 7h10M5 12h10" stroke="#333" stroke-width="1.4"/><text x="0" y="5" font-size="5" fill="#333">1</text><text x="0" y="13" font-size="5" fill="#333">2</text></svg>
<svg class="a" style="left:400px;top:762px" width="15" height="14" viewBox="0 0 15 14"><path d="M5 3h10M5 10h10" stroke="#333" stroke-width="1.6"/><circle cx="2" cy="3" r="2" fill="#333"/><circle cx="2" cy="10" r="2" fill="#333"/></svg>
<div class="a b nw" style="left:432px;top:760px;font-size:13px;color:#333">A</div><div class="a" style="left:431px;top:776px;width:12px;height:2px;background:#999"></div><div class="a" style="left:449px;top:768px;width:0;height:0;border-left:2.5px solid transparent;border-right:2.5px solid transparent;border-top:3.5px solid #333"></div>
<div class="a" style="left:467px;top:762px;width:13px;height:13px;background:#333"></div><div class="a b nw w" style="left:469px;top:762px;font-size:11px">A</div><div class="a" style="left:485px;top:768px;width:0;height:0;border-left:2.5px solid transparent;border-right:2.5px solid transparent;border-top:3.5px solid #333"></div>
<svg class="a" style="left:508px;top:762px" width="15" height="14" viewBox="0 0 15 14"><rect x="3" y="0" width="9" height="4" fill="none" stroke="#333" stroke-width="1.4"/><rect x="0" y="4" width="15" height="7" fill="#333"/><rect x="3" y="8" width="9" height="6" fill="#e2e0ea" stroke="#333" stroke-width="1.2"/></svg>
<svg class="a" style="left:536px;top:762px" width="14" height="14" viewBox="0 0 14 14"><path d="M0 0h5l-2 2 3 3-1 1-3-3-2 2zM14 0v5l-2-2-3 3-1-1 3-3-2-2zM0 14v-5l2 2 3-3 1 1-3 3 2 2zM14 14h-5l2-2-3-3 1-1 3 3 2-2z" fill="#333"/></svg>
<div class="a nw" style="left:76px;top:795px;font-size:12px;color:#444">Police</div><div class="a" style="left:118px;top:801px;width:0;height:0;border-left:3px solid transparent;border-right:3px solid transparent;border-top:4px solid #444"></div>
<div class="a" style="left:134px;top:793px;width:1px;height:17px;background:#bbb"></div>
<div class="a nw" style="left:146px;top:795px;font-size:12px;color:#444">Taille</div><div class="a" style="left:182px;top:801px;width:0;height:0;border-left:3px solid transparent;border-right:3px solid transparent;border-top:4px solid #444"></div>
<svg class="a" style="left:207px;top:796px" width="16" height="10" viewBox="0 0 16 10"><rect x="1" y="1" width="9" height="8" rx="4" fill="none" stroke="#333" stroke-width="1.6"/><rect x="6" y="1" width="9" height="8" rx="4" fill="none" stroke="#333" stroke-width="1.6"/></svg>
<svg class="a" style="left:235px;top:796px" width="16" height="13" viewBox="0 0 16 13"><rect x="1" y="1" width="9" height="7" rx="3.5" fill="none" stroke="#aaa" stroke-width="1.4"/><rect x="6" y="1" width="9" height="7" rx="3.5" fill="none" stroke="#aaa" stroke-width="1.4"/><path d="M10 8l4 4M14 8l-4 4" stroke="#aaa" stroke-width="1.4"/></svg>
<svg class="a" style="left:263px;top:795px" width="15" height="13" viewBox="0 0 15 13"><rect x="0.7" y="0.7" width="13.6" height="11.6" fill="none" stroke="#333" stroke-width="1.4"/><path d="M1 12 L5 6 L8 9 L10 7 L14 12z" fill="#333"/><circle cx="10" cy="4" r="1.5" fill="#333"/></svg>
<svg class="a" style="left:291px;top:795px" width="16" height="14" viewBox="0 0 16 14"><rect x="0.7" y="0.7" width="14.6" height="12.6" fill="none" stroke="#333" stroke-width="1.4"/><rect x="0.7" y="0.7" width="14.6" height="3" fill="#333"/><path d="M5.5 1v12M10.5 1v12M1 8.5h14" stroke="#333" stroke-width="1.2"/></svg>
<div class="a b nw" style="left:320px;top:793px;font-size:15px;color:#333;font-family:'Liberation Serif'">Ω</div>
<svg class="a" style="left:349px;top:794px" width="13" height="15" viewBox="0 0 13 15"><path d="M3 2H1v12h11V2h-2" fill="none" stroke="#333" stroke-width="1.3"/><rect x="4" y="0.5" width="5" height="3" fill="none" stroke="#333" stroke-width="1.2"/><rect x="4" y="6" width="8" height="8" fill="none" stroke="#333" stroke-width="1.2"/></svg>
<svg class="a" style="left:376px;top:794px" width="12" height="15" viewBox="0 0 12 15"><path d="M1 1h7l3 3v10H1z" fill="none" stroke="#333" stroke-width="1.3"/><path d="M5 6l-2 2.5 2 2.5M7 6l2 2.5-2 2.5" fill="none" stroke="#333" stroke-width="1.2"/></svg>
<div class="a" style="left:151px;top:760px;width:1px;height:18px;background:#bbb"></div>
<div class="a" style="left:245px;top:760px;width:1px;height:18px;background:#bbb"></div>
<div class="a" style="left:301px;top:760px;width:1px;height:18px;background:#bbb"></div>
<div class="a" style="left:421px;top:760px;width:1px;height:18px;background:#bbb"></div>
<div class="a nw" style="left:77px;top:845px;font-size:13px;line-height:20px;color:#333">This project is dedicated to maintenance of "web application" V1.0<br>It is sub-project of project one.</div>
<div class="a" style="left:48px;top:946px;width:20px;height:4px;background:#545081"></div>
<div class="a" style="left:48px;top:953px;width:20px;height:4px;background:#545081"></div>
<div class="a" style="left:48px;top:960px;width:20px;height:4px;background:#545081"></div>
<div class="a" style="left:658px;top:428px;width:1px;height:542px;background:#d0d0d0"></div>
<div class="a" style="left:664px;top:429px;width:601px;height:45px;background:#fff;border:1px solid #b8b8c4"></div>
<div class="a" style="left:754px;top:429px;width:1px;height:45px;background:#b8b8c4"></div>
<div class="a" style="left:802px;top:429px;width:1px;height:45px;background:#b8b8c4"></div>
<div class="a" style="left:923px;top:429px;width:1px;height:45px;background:#b8b8c4"></div>
<div class="a" style="left:1032px;top:429px;width:1px;height:45px;background:#b8b8c4"></div>
<div class="a" style="left:1111px;top:429px;width:1px;height:45px;background:#b8b8c4"></div>
<div class="a" style="left:1191px;top:429px;width:1px;height:45px;background:#b8b8c4"></div>
<div class="a" style="left:664px;top:451px;width:601px;height:1px;background:#b8b8c4"></div>
<svg class="a" style="left:679px;top:432px" width="17" height="17" viewBox="0 0 24 24"><path d="M3 21 L4 16 L16 4 L20 8 L8 20z" fill="#545081"/><path d="M17 3 L19 1 L23 5 L21 7z" fill="#545081"/></svg>
<svg class="a" style="left:700px;top:432px" width="17" height="17" viewBox="0 0 24 24"><rect x="4" y="4" width="16" height="2.5" fill="#545081"/><rect x="9" y="1.5" width="6" height="3" fill="none" stroke="#545081" stroke-width="1.6"/><path d="M6 7 V21 Q6 22 7 22 H17 Q18 22 18 21 V7" fill="none" stroke="#545081" stroke-width="2.2"/><path d="M9.5 9.5V19M12 9.5V19M14.5 9.5V19" stroke="#545081" stroke-width="1.5"/></svg>
<svg class="a" style="left:722px;top:432px" width="17" height="17" viewBox="0 0 24 24"><path d="M1 6 H6 L16 18 H20 M1 18 H6 L9 14 M12 10 L16 6 H20" fill="none" stroke="#545081" stroke-width="2.6"/><path d="M19 2 L24 6 L19 10z M19 14 L24 18 L19 22z" fill="#545081"/></svg>
<div class="a nw c" style="left:754px;top:433px;width:48px;font-size:10.5px;color:#333">1</div>
<div class="a nw" style="left:808px;top:433px;font-size:10.5px;color:#333">admin</div>
<div class="a nw c" style="left:923px;top:433px;width:109px;font-size:10.5px;color:#333">Chef de Projet</div>
<div class="a nw c" style="left:1191px;top:433px;width:74px;font-size:10.5px;color:#333">100</div>
<svg class="a" style="left:679px;top:454px" width="17" height="17" viewBox="0 0 24 24"><path d="M3 21 L4 16 L16 4 L20 8 L8 20z" fill="#545081"/><path d="M17 3 L19 1 L23 5 L21 7z" fill="#545081"/></svg>
<svg class="a" style="left:700px;top:454px" width="17" height="17" viewBox="0 0 24 24"><rect x="4" y="4" width="16" height="2.5" fill="#545081"/><rect x="9" y="1.5" width="6" height="3" fill="none" stroke="#545081" stroke-width="1.6"/><path d="M6 7 V21 Q6 22 7 22 H17 Q18 22 18 21 V7" fill="none" stroke="#545081" stroke-width="2.2"/><path d="M9.5 9.5V19M12 9.5V19M14.5 9.5V19" stroke="#545081" stroke-width="1.5"/></svg>
<svg class="a" style="left:722px;top:454px" width="17" height="17" viewBox="0 0 24 24"><path d="M1 6 H6 L16 18 H20 M1 18 H6 L9 14 M12 10 L16 6 H20" fill="none" stroke="#545081" stroke-width="2.6"/><path d="M19 2 L24 6 L19 10z M19 14 L24 18 L19 22z" fill="#545081"/></svg>
<div class="a nw c" style="left:754px;top:455px;width:48px;font-size:10.5px;color:#333">4</div>
<div class="a nw" style="left:808px;top:455px;font-size:10.5px;color:#333">analyst A</div>
<div class="a nw c" style="left:923px;top:455px;width:109px;font-size:10.5px;color:#333">Membre d'équipe</div>
<div class="a nw c" style="left:1191px;top:455px;width:74px;font-size:10.5px;color:#333">100</div>
<div class="a" style="left:664px;top:473px;width:601px;height:21px;background:#cfcce0;border:1px solid #b8b8c4"></div><div class="a" style="left:754px;top:473px;width:1px;height:21px;background:#b8b8c4"></div><div class="a" style="left:802px;top:473px;width:1px;height:21px;background:#b8b8c4"></div><div class="a" style="left:923px;top:473px;width:1px;height:21px;background:#b8b8c4"></div><div class="a" style="left:1032px;top:473px;width:1px;height:21px;background:#b8b8c4"></div><div class="a" style="left:1111px;top:473px;width:1px;height:21px;background:#b8b8c4"></div><div class="a" style="left:1191px;top:473px;width:1px;height:21px;background:#b8b8c4"></div><div class="a nw c" style="left:664px;top:477px;width:90px;font-size:12px;color:#6d6a8c"></div><div class="a nw c" style="left:754px;top:477px;width:48px;font-size:12px;color:#6d6a8c">id</div><div class="a nw c" style="left:802px;top:477px;width:121px;font-size:12px;color:#6d6a8c">contact</div><div class="a nw c" style="left:923px;top:477px;width:109px;font-size:12px;color:#6d6a8c">profil</div><div class="a nw c" style="left:1032px;top:477px;width:79px;font-size:12px;color:#6d6a8c">date début</div><div class="a nw c" style="left:1111px;top:477px;width:80px;font-size:12px;color:#6d6a8c">date fin</div><div class="a nw c" style="left:1191px;top:477px;width:74px;font-size:12px;color:#6d6a8c">taux (%)</div>
<svg class="a" style="left:700px;top:476px" width="17" height="17" viewBox="0 0 24 24"><path d="M12 2 V22 M2 12 H22" stroke="#545081" stroke-width="4.5"/></svg>
<div class="a" style="left:664px;top:499px;width:601px;height:22px;background:#7b7599"></div><div class="a" style="left:669px;top:507px;width:0;height:0;border-left:4px solid transparent;border-right:4px solid transparent;border-top:5px solid #fff"></div><div class="a w b nw" style="left:680px;top:503px;font-size:12.5px;letter-spacing:.2px">Traitement</div>
<div class="a nw r" style="left:479px;top:532px;width:300px;font-size:12px;color:#5b587e">état</div>
<div class="a nw r" style="left:479px;top:555px;width:300px;font-size:12px;color:#5b587e">situation</div>
<div class="a nw r" style="left:479px;top:578px;width:300px;font-size:12px;color:#5b587e">niveau de qualité</div>
<div class="a nw r" style="left:479px;top:601px;width:300px;font-size:12px;color:#5b587e">tendance</div>
<div class="a nw r" style="left:504px;top:624px;width:300px;font-size:12px;color:#5b587e">avancement global :</div>
<div class="a nw r" style="left:504px;top:647px;width:300px;font-size:12px;color:#5b587e">figer le planning :</div>
<div class="a nw r" style="left:504px;top:670px;width:300px;font-size:12px;color:#5b587e">figer le périmètre :</div>
<div class="a nw r" style="left:504px;top:693px;width:300px;font-size:12px;color:#5b587e">en construction :</div>
<div class="a nw r" style="left:504px;top:716px;width:300px;font-size:12px;color:#5b587e">exclure du plan global :</div>
<div class="a nw r" style="left:504px;top:739px;width:300px;font-size:12px;color:#5b587e">pris en charge :</div>
<div class="a nw r" style="left:504px;top:762px;width:300px;font-size:12px;color:#5b587e">fait :</div>
<div class="a nw r" style="left:504px;top:785px;width:300px;font-size:12px;color:#5b587e">clos :</div>
<div class="a" style="left:789px;top:528px;width:19px;height:19px;border-radius:50%;background:#ffa500;border:1px solid #ccc"></div>
<div class="a" style="left:789px;top:551px;width:19px;height:19px;border-radius:50%;background:#32cd32;border:1px solid #ccc"></div>
<div class="a" style="left:789px;top:574px;width:19px;height:19px;border-radius:50%;background:#32cd32;border:1px solid #ccc"></div>
<div class="a" style="left:789px;top:597px;width:19px;height:19px;border-radius:50%;background:#32cd32;border:1px solid #ccc"></div>
<div class="a" style="left:810px;top:527px;width:223px;height:21px;background:linear-gradient(#ececec,#fff 45%);border:1px solid #b4b4b4"></div><div class="a" style="left:810px;top:527px;width:3px;height:21px;background:#ff0000"></div><div class="a nw" style="left:817px;top:531px;font-size:11.5px;color:#111">recorded</div><div class="a" style="left:1013px;top:527px;width:20px;height:21px;background:#cfcce0;border:1px solid #b4b4b4"></div><div class="a" style="left:1019.0px;top:535.5px;width:0;height:0;border-left:4px solid transparent;border-right:4px solid transparent;border-top:5px solid #000"></div>
<div class="a" style="left:1040px;top:526px;width:216px;height:22px;border-radius:11px;background:#cfcce0;border:1px solid #c4c2d4"></div>
<svg class="a" style="left:1045px;top:529px" width="17" height="17" viewBox="0 0 24 24"><path d="M8 3 H21 V21 H8 V16" fill="none" stroke="#545081" stroke-width="2.4"/><path d="M8 8 V3" stroke="#545081" stroke-width="2.4"/><path d="M2 12 H14 M10 7 L15 12 L10 17" fill="none" stroke="#545081" stroke-width="2.4"/></svg>
<div class="a nw" style="left:1066px;top:530px;font-size:11.5px;color:#6d6a8c">qualified</div>
<div class="a" style="left:810px;top:550px;width:450px;height:21px;background:linear-gradient(#ececec,#fff 45%);border:1px solid #b4b4b4"></div><div class="a nw" style="left:815px;top:554px;font-size:11.5px;color:#111">secured</div><div class="a" style="left:1240px;top:550px;width:20px;height:21px;background:#cfcce0;border:1px solid #b4b4b4"></div><div class="a" style="left:1246.0px;top:558.5px;width:0;height:0;border-left:4px solid transparent;border-right:4px solid transparent;border-top:5px solid #000"></div>
<div class="a" style="left:810px;top:573px;width:450px;height:21px;background:linear-gradient(#ececec,#fff 45%);border:1px solid #b4b4b4"></div><div class="a nw" style="left:815px;top:577px;font-size:11.5px;color:#111">conform</div><div class="a" style="left:1240px;top:573px;width:20px;height:21px;background:#cfcce0;border:1px solid #b4b4b4"></div><div class="a" style="left:1246.0px;top:581.5px;width:0;height:0;border-left:4px solid transparent;border-right:4px solid transparent;border-top:5px solid #000"></div>
<div class="a" style="left:810px;top:596px;width:450px;height:21px;background:linear-gradient(#ececec,#fff 45%);border:1px solid #b4b4b4"></div><div class="a nw" style="left:815px;top:600px;font-size:11.5px;color:#111">increasing</div><div class="a" style="left:1240px;top:596px;width:20px;height:21px;background:#cfcce0;border:1px solid #b4b4b4"></div><div class="a" style="left:1246.0px;top:604.5px;width:0;height:0;border-left:4px solid transparent;border-right:4px solid transparent;border-top:5px solid #000"></div>
<div class="a" style="left:810px;top:619px;width:450px;height:21px;background:linear-gradient(#ececec,#fff 45%);border:1px solid #b4b4b4"></div><div class="a nw" style="left:815px;top:623px;font-size:11.5px;color:#111">10%</div><div class="a" style="left:1240px;top:619px;width:20px;height:21px;background:#cfcce0;border:1px solid #b4b4b4"></div><div class="a" style="left:1246.0px;top:627.5px;width:0;height:0;border-left:4px solid transparent;border-right:4px solid transparent;border-top:5px solid #000"></div>
<div class="a" style="left:809px;top:643px;width:17px;height:17px;background:#fff;border:1px solid #888;border-radius:4px"></div>
<div class="a nw" style="left:829px;top:645px;font-size:11.5px;color:#4d4a72">exclure du calcul du planning</div>
<div class="a" style="left:809px;top:666px;width:17px;height:17px;background:#fff;border:1px solid #888;border-radius:4px"></div>
<div class="a nw" style="left:829px;top:668px;font-size:11.5px;color:#4d4a72">empêcher l'ajout ou la suppression d'éléments du planning</div>
<div class="a" style="left:809px;top:689px;width:17px;height:17px;background:#fff;border:1px solid #888;border-radius:4px"></div>
<div class="a nw" style="left:829px;top:691px;font-size:11.5px;color:#4d4a72">le projet n'est pas commencé</div>
<div class="a" style="left:809px;top:712px;width:17px;height:17px;background:#fff;border:1px solid #888;border-radius:4px"></div>
<div class="a nw" style="left:829px;top:714px;font-size:11.5px;color:#4d4a72">ne pas montrer tous les éléments sur le planning global</div>
<div class="a" style="left:809px;top:735px;width:17px;height:17px;background:#fff;border:1px solid #888;border-radius:4px"></div>
<div class="a" style="left:830px;top:734px;width:74px;height:21px;background:linear-gradient(#ececec,#fff 45%);border:1px solid #b4b4b4"></div>
<div class="a" style="left:809px;top:758px;width:17px;height:17px;background:#fff;border:1px solid #888;border-radius:4px"></div>
<div class="a" style="left:830px;top:757px;width:74px;height:21px;background:linear-gradient(#ececec,#fff 45%);border:1px solid #b4b4b4"></div>
<div class="a" style="left:809px;top:781px;width:17px;height:17px;background:#fff;border:1px solid #888;border-radius:4px"></div>
<div class="a" style="left:830px;top:780px;width:74px;height:21px;background:linear-gradient(#ececec,#fff 45%);border:1px solid #b4b4b4"></div>
<div class="a" style="left:916px;top:782px;width:17px;height:17px;background:#fff;border:1px solid #888;border-radius:4px"></div>
<div class="a nw" style="left:937px;top:782px;font-size:11.5px;color:#4d4a72">annulé</div>
<div class="a" style="left:663px;top:806px;width:602px;height:22px;background:#7b7599"></div><div class="a" style="left:668px;top:814px;width:0;height:0;border-left:4px solid transparent;border-right:4px solid transparent;border-top:5px solid #fff"></div><div class="a w b nw" style="left:679px;top:810px;font-size:12.5px;letter-spacing:.2px">Produits liés à ce projet</div>
<div class="a" style="left:664px;top:833px;width:601px;height:21px;background:#cfcce0;border:1px solid #b8b8c4"></div><div class="a" style="left:724px;top:833px;width:1px;height:21px;background:#b8b8c4"></div><div class="a" style="left:1025px;top:833px;width:1px;height:21px;background:#b8b8c4"></div><div class="a" style="left:1115px;top:833px;width:1px;height:21px;background:#b8b8c4"></div><div class="a" style="left:1205px;top:833px;width:1px;height:21px;background:#b8b8c4"></div><div class="a nw c" style="left:664px;top:837px;width:60px;font-size:12px;color:#6d6a8c"></div><div class="a nw c" style="left:724px;top:837px;width:301px;font-size:12px;color:#6d6a8c">produit</div><div class="a nw c" style="left:1025px;top:837px;width:90px;font-size:12px;color:#6d6a8c">date début</div><div class="a nw c" style="left:1115px;top:837px;width:90px;font-size:12px;color:#6d6a8c">date fin</div><div class="a nw c" style="left:1205px;top:837px;width:60px;font-size:12px;color:#6d6a8c">clos</div>
<svg class="a" style="left:685px;top:836px" width="17" height="17" viewBox="0 0 24 24"><path d="M12 2 V22 M2 12 H22" stroke="#545081" stroke-width="4.5"/></svg>
<div class="a" style="left:663px;top:859px;width:602px;height:22px;background:#7b7599"></div><div class="a" style="left:668px;top:867px;width:0;height:0;border-left:4px solid transparent;border-right:4px solid transparent;border-top:5px solid #fff"></div><div class="a w b nw" style="left:679px;top:863px;font-size:12.5px;letter-spacing:.2px">Versions liées à ce projet</div><div class="a b c nw" style="left:1217px;top:863px;width:42px;height:14px;border-radius:7px;background:#fff;border:1px solid #333;box-shadow:1px 1px 1px #222;font-size:10px;line-height:12px;color:#545081">1</div>
<div class="a" style="left:664px;top:886px;width:601px;height:21px;background:#cfcce0;border:1px solid #b8b8c4"></div><div class="a" style="left:724px;top:886px;width:1px;height:21px;background:#b8b8c4"></div><div class="a" style="left:1025px;top:886px;width:1px;height:21px;background:#b8b8c4"></div><div class="a" style="left:1115px;top:886px;width:1px;height:21px;background:#b8b8c4"></div><div class="a" style="left:1205px;top:886px;width:1px;height:21px;background:#b8b8c4"></div><div class="a nw c" style="left:664px;top:890px;width:60px;font-size:12px;color:#6d6a8c"></div><div class="a nw c" style="left:724px;top:890px;width:301px;font-size:12px;color:#6d6a8c">version</div><div class="a nw c" style="left:1025px;top:890px;width:90px;font-size:12px;color:#6d6a8c">date début</div><div class="a nw c" style="left:1115px;top:890px;width:90px;font-size:12px;color:#6d6a8c">date fin</div><div class="a nw c" style="left:1205px;top:890px;width:60px;font-size:12px;color:#6d6a8c">clos</div>
<svg class="a" style="left:685px;top:889px" width="17" height="17" viewBox="0 0 24 24"><path d="M12 2 V22 M2 12 H22" stroke="#545081" stroke-width="4.5"/></svg>
<div class="a" style="left:664px;top:907px;width:601px;height:22px;background:#fff;border:1px solid #b8b8c4;border-top:none"></div>
<div class="a" style="left:724px;top:907px;width:1px;height:22px;background:#b8b8c4"></div>
<div class="a" style="left:1025px;top:907px;width:1px;height:22px;background:#b8b8c4"></div>
<div class="a" style="left:1115px;top:907px;width:1px;height:22px;background:#b8b8c4"></div>
<div class="a" style="left:1205px;top:907px;width:1px;height:22px;background:#b8b8c4"></div>
<svg class="a" style="left:674px;top:909px" width="17" height="17" viewBox="0 0 24 24"><path d="M3 21 L4 16 L16 4 L20 8 L8 20z" fill="#545081"/><path d="M17 3 L19 1 L23 5 L21 7z" fill="#545081"/></svg>
<svg class="a" style="left:696px;top:909px" width="17" height="17" viewBox="0 0 24 24"><rect x="4" y="4" width="16" height="2.5" fill="#545081"/><rect x="9" y="1.5" width="6" height="3" fill="none" stroke="#545081" stroke-width="1.6"/><path d="M6 7 V21 Q6 22 7 22 H17 Q18 22 18 21 V7" fill="none" stroke="#545081" stroke-width="2.2"/><path d="M9.5 9.5V19M12 9.5V19M14.5 9.5V19" stroke="#545081" stroke-width="1.5"/></svg>
<div class="a nw" style="left:730px;top:910px;font-size:10px;color:#333">wa V1.0</div>
<div class="a" style="left:1228px;top:909px;width:15px;height:15px;background:linear-gradient(#eee,#fafafa);border:1px solid #aaa"></div>
<div class="a" style="left:663px;top:933px;width:602px;height:22px;background:#7b7599"></div><div class="a" style="left:668px;top:941px;width:0;height:0;border-left:4px solid transparent;border-right:4px solid transparent;border-top:5px solid #fff"></div><div class="a w b nw" style="left:679px;top:937px;font-size:12.5px;letter-spacing:.2px">Sous projets</div>
<div class="a" style="left:1270px;top:428px;width:310px;height:6px;background:#cfcce0;border-bottom:2px solid #8a8a8a"></div>
<div class="a b nw" style="left:1348px;top:435px;font-size:12px;color:#545081">validé</div>
<div class="a b nw" style="left:1558px;top:435px;font-size:12px;color:#545081">planifié</div>
<div class="a nw r" style="left:1043px;top:453px;width:300px;font-size:12px;color:#5b587e">date début :</div>
<div class="a" style="left:1349px;top:449px;width:74px;height:20px;background:linear-gradient(#ececec,#fff 45%);border:1px solid #b4b4b4"></div><div class="a nw" style="left:1353px;top:453px;font-size:11.5px;color:#111">02/11/2015</div>
<div class="a nw r" style="left:1043px;top:476px;width:300px;font-size:12px;color:#5b587e">date fin :</div>
<div class="a" style="left:1349px;top:472px;width:74px;height:20px;background:linear-gradient(#ececec,#fff 45%);border:1px solid #b4b4b4"></div><div class="a nw" style="left:1353px;top:476px;font-size:11.5px;color:#111">29/02/2016</div>
<div class="a nw r" style="left:1043px;top:500px;width:300px;font-size:12px;color:#5b587e">durée :</div>
<div class="a" style="left:1349px;top:496px;width:74px;height:20px;background:linear-gradient(#ececec,#fff 45%);border:1px solid #b4b4b4"></div><div class="a nw r" style="left:1349px;top:500px;width:69px;font-size:11.5px;color:#111">86</div>
<div class="a nw" style="left:1424px;top:500px;font-size:12px;color:#222">j</div>
<div class="a" style="left:1559px;top:449px;width:30px;height:20px;background:#efefef;border:1px solid #b4b4b4"></div><div class="a nw" style="left:1563px;top:453px;font-size:11.5px;color:#555">24/01</div>
<div class="a" style="left:1559px;top:472px;width:30px;height:20px;background:#ffaaaa;border:1px solid #b4b4b4"></div><div class="a nw" style="left:1563px;top:475px;font-size:11.5px;color:#c44">13/02</div>
<div class="a" style="left:1559px;top:496px;width:30px;height:20px;background:#efefef;border:1px solid #b4b4b4"></div>
<div class="a" style="left:1270px;top:521px;width:320px;height:21px;background:#cfcce0;border-top:1px solid #888;border-bottom:1px solid #999;border-left:2px solid #888"></div>
<div class="a nw" style="left:1527px;top:525px;font-size:12px;color:#6d6a8c">Charges et</div>
<div class="a b nw" style="left:1348px;top:544px;font-size:12px;color:#545081">validé</div>
<div class="a b nw" style="left:1453px;top:544px;font-size:12px;color:#545081">assigné</div>
<div class="a b nw" style="left:1558px;top:544px;font-size:12px;color:#545081">réel</div>
<div class="a nw r" style="left:1043px;top:563px;width:300px;font-size:12px;color:#5b587e">charge :</div>
<div class="a nw r" style="left:1043px;top:586px;width:300px;font-size:12px;color:#5b587e">coût :</div>
<div class="a nw r" style="left:1043px;top:609px;width:300px;font-size:12px;color:#5b587e">dépenses :</div>
<div class="a nw r" style="left:1043px;top:632px;width:300px;font-size:12px;color:#5b587e">réserve :</div>
<div class="a nw r" style="left:1043px;top:655px;width:300px;font-size:12px;color:#5b587e">coût total :</div>
<div class="a" style="left:1349px;top:558px;width:74px;height:19px;background:linear-gradient(#ececec,#fff 45%);border:1px solid #b4b4b4"></div><div class="a nw r" style="left:1349px;top:562px;width:69px;font-size:11.5px;color:#111">100</div>
<div class="a nw" style="left:1424px;top:561px;font-size:12px;color:#222">j</div>
<div class="a" style="left:1454px;top:558px;width:74px;height:19px;background:#efefef;border:1px solid #b4b4b4"></div><div class="a nw r" style="left:1454px;top:562px;width:69px;font-size:11.5px;color:#555">14,8</div>
<div class="a nw" style="left:1529px;top:561px;font-size:12px;color:#222">j</div>
<div class="a" style="left:1559px;top:558px;width:30px;height:19px;background:#efefef;border:1px solid #b4b4b4"></div>
<div class="a" style="left:1349px;top:581px;width:92px;height:19px;background:linear-gradient(#ececec,#fff 45%);border:1px solid #b4b4b4"></div>
<div class="a nw" style="left:1443px;top:584px;font-size:12px;color:#222">€</div>
<div class="a" style="left:1454px;top:581px;width:92px;height:19px;background:#efefef;border:1px solid #b4b4b4"></div><div class="a nw r" style="left:1454px;top:585px;width:87px;font-size:11.5px;color:#555">0</div>
<div class="a nw" style="left:1548px;top:584px;font-size:12px;color:#222">€</div>
<div class="a" style="left:1559px;top:581px;width:30px;height:19px;background:#efefef;border:1px solid #b4b4b4"></div>
<div class="a" style="left:1349px;top:604px;width:92px;height:19px;background:linear-gradient(#ececec,#fff 45%);border:1px solid #b4b4b4"></div>
<div class="a nw" style="left:1443px;top:607px;font-size:12px;color:#222">€</div>
<div class="a" style="left:1454px;top:604px;width:92px;height:19px;background:#efefef;border:1px solid #b4b4b4"></div><div class="a nw r" style="left:1454px;top:608px;width:87px;font-size:11.5px;color:#555">0,00</div>
<div class="a nw" style="left:1548px;top:607px;font-size:12px;color:#222">€</div>
<div class="a" style="left:1559px;top:604px;width:30px;height:19px;background:#efefef;border:1px solid #b4b4b4"></div>
<div class="a" style="left:1349px;top:650px;width:92px;height:19px;background:#efefef;border:1px solid #b4b4b4"></div><div class="a nw r" style="left:1349px;top:654px;width:87px;font-size:11.5px;color:#555">0</div>
<div class="a nw" style="left:1443px;top:653px;font-size:12px;color:#222">€</div>
<div class="a" style="left:1454px;top:650px;width:92px;height:19px;background:#efefef;border:1px solid #b4b4b4"></div><div class="a nw r" style="left:1454px;top:654px;width:87px;font-size:11.5px;color:#555">0</div>
<div class="a nw" style="left:1548px;top:653px;font-size:12px;color:#222">€</div>
<div class="a" style="left:1559px;top:650px;width:30px;height:19px;background:#efefef;border:1px solid #b4b4b4"></div>
<div class="a" style="left:1270px;top:675px;width:320px;height:21px;background:#cfcce0;border-top:1px solid #888;border-bottom:1px solid #999;border-left:2px solid #888"></div>
<div class="a nw" style="left:1551px;top:679px;font-size:12px;color:#6d6a8c">Pilotage</div>
<div class="a nw r" style="left:1043px;top:705px;width:300px;font-size:12px;color:#5b587e">avancement :</div>
<div class="a nw" style="left:1350px;top:704px;font-size:12px;color:#222">71 %</div>
<div class="a nw r" style="left:1043px;top:729px;width:300px;font-size:12px;color:#5b587e">marge :</div>
<div class="a" style="left:1349px;top:725px;width:74px;height:19px;background:#efefef;border:1px solid #b4b4b4"></div><div class="a nw r" style="left:1349px;top:729px;width:69px;font-size:11.5px;color:#555">85,2</div>
<div class="a nw" style="left:1424px;top:728px;font-size:12px;color:#222">j</div>
<div class="a nw" style="left:1545px;top:728px;font-size:12px;color:#222">85 %</div>
<div class="a nw r" style="left:1043px;top:753px;width:300px;font-size:12px;color:#5b587e">priorité :</div>
<div class="a" style="left:1349px;top:748px;width:46px;height:19px;background:linear-gradient(#ececec,#fff 45%);border:1px solid #b4b4b4"></div><div class="a nw r" style="left:1349px;top:752px;width:41px;font-size:11.5px;color:#111">500</div>
<div class="a" style="left:1580px;top:428px;width:2px;height:544px;background:#f9f9f9"></div>
<div class="a" style="left:1270px;top:773px;width:310px;height:22px;background:#7b7599"></div><div class="a" style="left:1275px;top:781px;width:0;height:0;border-left:4px solid transparent;border-right:4px solid transparent;border-top:5px solid #fff"></div><div class="a w b nw" style="left:1286px;top:777px;font-size:12.5px;letter-spacing:.2px">Eléments liés</div>
<div class="a" style="left:1270px;top:800px;width:310px;height:22px;background:#cfcce0;border:1px solid #b8b8c4"></div><div class="a" style="left:1301px;top:800px;width:1px;height:22px;background:#b8b8c4"></div><div class="a" style="left:1391px;top:800px;width:1px;height:22px;background:#b8b8c4"></div><div class="a nw c" style="left:1270px;top:804px;width:31px;font-size:12px;color:#6d6a8c"></div><div class="a nw c" style="left:1301px;top:804px;width:90px;font-size:12px;color:#6d6a8c">élément</div><div class="a nw r" style="left:1391px;top:804px;width:181px;font-size:12px;color:#6d6a8c">nom</div>
<svg class="a" style="left:1277px;top:803px" width="17" height="17" viewBox="0 0 24 24"><path d="M12 2 V22 M2 12 H22" stroke="#545081" stroke-width="4.5"/></svg>
<div class="a" style="left:1270px;top:826px;width:310px;height:22px;background:#7b7599"></div><div class="a" style="left:1275px;top:834px;width:0;height:0;border-left:4px solid transparent;border-right:4px solid transparent;border-top:5px solid #fff"></div><div class="a w b nw" style="left:1286px;top:830px;font-size:12.5px;letter-spacing:.2px">Fichiers attachés</div>
<div class="a" style="left:1270px;top:853px;width:310px;height:22px;background:#cfcce0;border:1px solid #b8b8c4"></div><div class="a" style="left:1331px;top:853px;width:1px;height:22px;background:#b8b8c4"></div><div class="a" style="left:1362px;top:853px;width:1px;height:22px;background:#b8b8c4"></div><div class="a nw c" style="left:1270px;top:857px;width:61px;font-size:12px;color:#6d6a8c"></div><div class="a nw c" style="left:1331px;top:857px;width:31px;font-size:12px;color:#6d6a8c">id</div><div class="a nw c" style="left:1362px;top:857px;width:218px;font-size:12px;color:#6d6a8c"></div>
<svg class="a" style="left:1281px;top:856px" width="17" height="17" viewBox="0 0 24 24"><path d="M12 2 V22 M2 12 H22" stroke="#545081" stroke-width="4.5"/></svg>
<svg class="a" style="left:1303px;top:856px" width="16" height="16" viewBox="0 0 24 24"><rect x="2" y="3" width="11" height="7" rx="3.5" transform="rotate(40 7.5 6.5)" fill="none" stroke="#545081" stroke-width="2.3"/><rect x="11" y="13" width="11" height="7" rx="3.5" transform="rotate(40 16.5 16.5)" fill="none" stroke="#545081" stroke-width="2.3"/><path d="M9 9 L15 15" stroke="#545081" stroke-width="2"/></svg>
<div class="a" style="left:1270px;top:880px;width:310px;height:22px;background:#7b7599"></div><div class="a" style="left:1275px;top:888px;width:0;height:0;border-left:4px solid transparent;border-right:4px solid transparent;border-top:5px solid #fff"></div><div class="a w b nw" style="left:1286px;top:884px;font-size:12.5px;letter-spacing:.2px">Notes</div>
<div class="a" style="left:1270px;top:908px;width:310px;height:21px;background:#cfcce0;border:1px solid #b8b8c4"></div><div class="a" style="left:1342px;top:908px;width:1px;height:21px;background:#b8b8c4"></div><div class="a" style="left:1374px;top:908px;width:1px;height:21px;background:#b8b8c4"></div><div class="a nw c" style="left:1270px;top:912px;width:72px;font-size:12px;color:#6d6a8c"></div><div class="a nw c" style="left:1342px;top:912px;width:32px;font-size:12px;color:#6d6a8c">id</div><div class="a nw c" style="left:1374px;top:912px;width:206px;font-size:12px;color:#6d6a8c"></div>
<svg class="a" style="left:1297px;top:910px" width="17" height="17" viewBox="0 0 24 24"><path d="M12 2 V22 M2 12 H22" stroke="#545081" stroke-width="4.5"/></svg>
<div class="a" style="left:1270px;top:928px;width:310px;height:25px;background:#fff;border:1px solid #b8b8c4;border-top:none"></div>
<div class="a" style="left:1342px;top:928px;width:1px;height:25px;background:#b8b8c4"></div>
<div class="a" style="left:1374px;top:928px;width:1px;height:25px;background:#b8b8c4"></div>
<svg class="a" style="left:1276px;top:930px" width="17" height="17" viewBox="0 0 24 24"><path d="M10 4 L2 11 L10 18 V13 Q17 13 21 20 Q20 9 10 8z" fill="#545081"/></svg>
<svg class="a" style="left:1298px;top:930px" width="17" height="17" viewBox="0 0 24 24"><path d="M3 21 L4 16 L16 4 L20 8 L8 20z" fill="#545081"/><path d="M17 3 L19 1 L23 5 L21 7z" fill="#545081"/></svg>
<svg class="a" style="left:1319px;top:930px" width="17" height="17" viewBox="0 0 24 24"><rect x="4" y="4" width="16" height="2.5" fill="#545081"/><rect x="9" y="1.5" width="6" height="3" fill="none" stroke="#545081" stroke-width="1.6"/><path d="M6 7 V21 Q6 22 7 22 H17 Q18 22 18 21 V7" fill="none" stroke="#545081" stroke-width="2.2"/><path d="M9.5 9.5V19M12 9.5V19M14.5 9.5V19" stroke="#545081" stroke-width="1.5"/></svg>
<div class="a nw" style="left:1349px;top:932px;font-size:10px;color:#444">#75</div>
<div class="a nw" style="left:1380px;top:932px;font-size:10px;color:#444">new actuality of project one</div>
<div class="a" style="left:1582px;top:428px;width:12px;height:542px;background:#dcdae8"></div>
<div class="a" style="left:1582px;top:455px;width:11px;height:285px;background:#7d789f"></div>
<div class="a" style="left:1576px;top:946px;width:18px;height:4px;background:#545081"></div>
<div class="a" style="left:1576px;top:953px;width:18px;height:4px;background:#545081"></div>
<div class="a" style="left:1576px;top:960px;width:18px;height:4px;background:#545081"></div>
<div class="a" style="left:1594px;top:83px;width:5px;height:889px;background:#545081"></div>
<div class="a" style="left:1599px;top:83px;width:320px;height:889px;background:#f9f9f9"></div>
<div class="a" style="left:1599px;top:84px;width:320px;height:28px;background:#a5a0c0"></div>
<div class="a" style="left:1599px;top:111px;width:320px;height:1px;background:#8a86aa"></div>
<div class="a" style="left:1599px;top:112px;width:1px;height:858px;background:#d0d0d0"></div>
<div class="a w b c nw" style="left:1599px;top:87px;width:320px;font-size:18px;letter-spacing:.4px">Flux d'activités</div>
<div class="a" style="left:1600px;top:113px;width:319px;height:74px;background:#fff;border-bottom:1px solid #bbb"></div>
<div class="a" style="left:1606px;top:121px;width:30px;height:30px;border-radius:50%;background:#2ecc71"></div>
<div class="a w c nw" style="left:1606px;top:123px;width:30px;font-size:23px;line-height:26px">A</div>
<div class="a nw" style="left:1646px;top:116px;font-size:10.5px;color:#666;letter-spacing:.15px"><b style="color:#2020f0">admin</b> a ajouté la note <span style="color:#2020f0">#75</span> dans <span style="color:#2020f0">Project #2</span></div>
<div class="a" style="left:1646px;top:133px;width:22px;height:20px;background:#fff;border:1.5px solid #f06a6a;border-top:4px solid #f06a6a;border-radius:2px"></div>
<div class="a c nw" style="left:1646px;top:139px;width:22px;font-size:7px;color:#333">13/02</div>
<div class="a nw" style="left:1672px;top:136px;font-size:11px;color:#545081;letter-spacing:.3px">13/02/2019 10:29:28</div>
<svg class="a" style="left:1877px;top:117px" width="16" height="16" viewBox="0 0 24 24"><path d="M9 4 L1 11 L9 18z" fill="#545081"/><path d="M14 4 L6 11 L14 18 V13 Q19 13 23 20 Q22 9 14 8z" fill="#545081"/></svg>
<svg class="a" style="left:1895px;top:116px" width="17" height="17" viewBox="0 0 24 24"><rect x="4" y="4" width="16" height="2.5" fill="#545081"/><rect x="9" y="1.5" width="6" height="3" fill="none" stroke="#545081" stroke-width="1.6"/><path d="M6 7 V21 Q6 22 7 22 H17 Q18 22 18 21 V7" fill="none" stroke="#545081" stroke-width="2.2"/><path d="M9.5 9.5V19M12 9.5V19M14.5 9.5V19" stroke="#545081" stroke-width="1.5"/></svg>
<svg class="a" style="left:1894px;top:135px" width="18" height="17" viewBox="0 0 18 17"><path d="M1 1l5 5M6 2v4H2M17 1l-5 5M12 2v4h4M1 16l5-5M6 15v-4H2M17 16l-5-5M12 15v-4h4" stroke="#545081" stroke-width="2.2" fill="none"/></svg>
<div class="a nw" style="left:1609px;top:164px;font-size:10.5px;color:#222">new actuality of project one</div>
<div class="a" style="left:1600px;top:901px;width:319px;height:67px;background:#fff;border:1px solid #aaa;border-right:none"></div>
<div class="a nw" style="left:1606px;top:905px;font-size:11.5px;color:#222">Entrez votre texte ici</div>
<div class="a" style="left:1900px;top:950px;width:17px;height:15px;background:#eee;border-radius:4px 0 0 0"></div>
<div class="a nw" style="left:1902px;top:951px;font-size:9px;color:#999">...</div>
<div class="a" style="left:1596px;top:519px;width:2px;height:18px;background:repeating-linear-gradient(#fff 0 2px,transparent 2px 4px)"></div>
<div class="a" style="left:1917px;top:112px;width:2px;height:858px;background:#b0b0b0"></div>
<div class="a" style="left:390px;top:970px;width:1529px;height:2px;background:#05050f"></div>
<div class="a" style="left:0;top:970px;width:47px;height:2px;background:#05050f"></div>
</body></html>
